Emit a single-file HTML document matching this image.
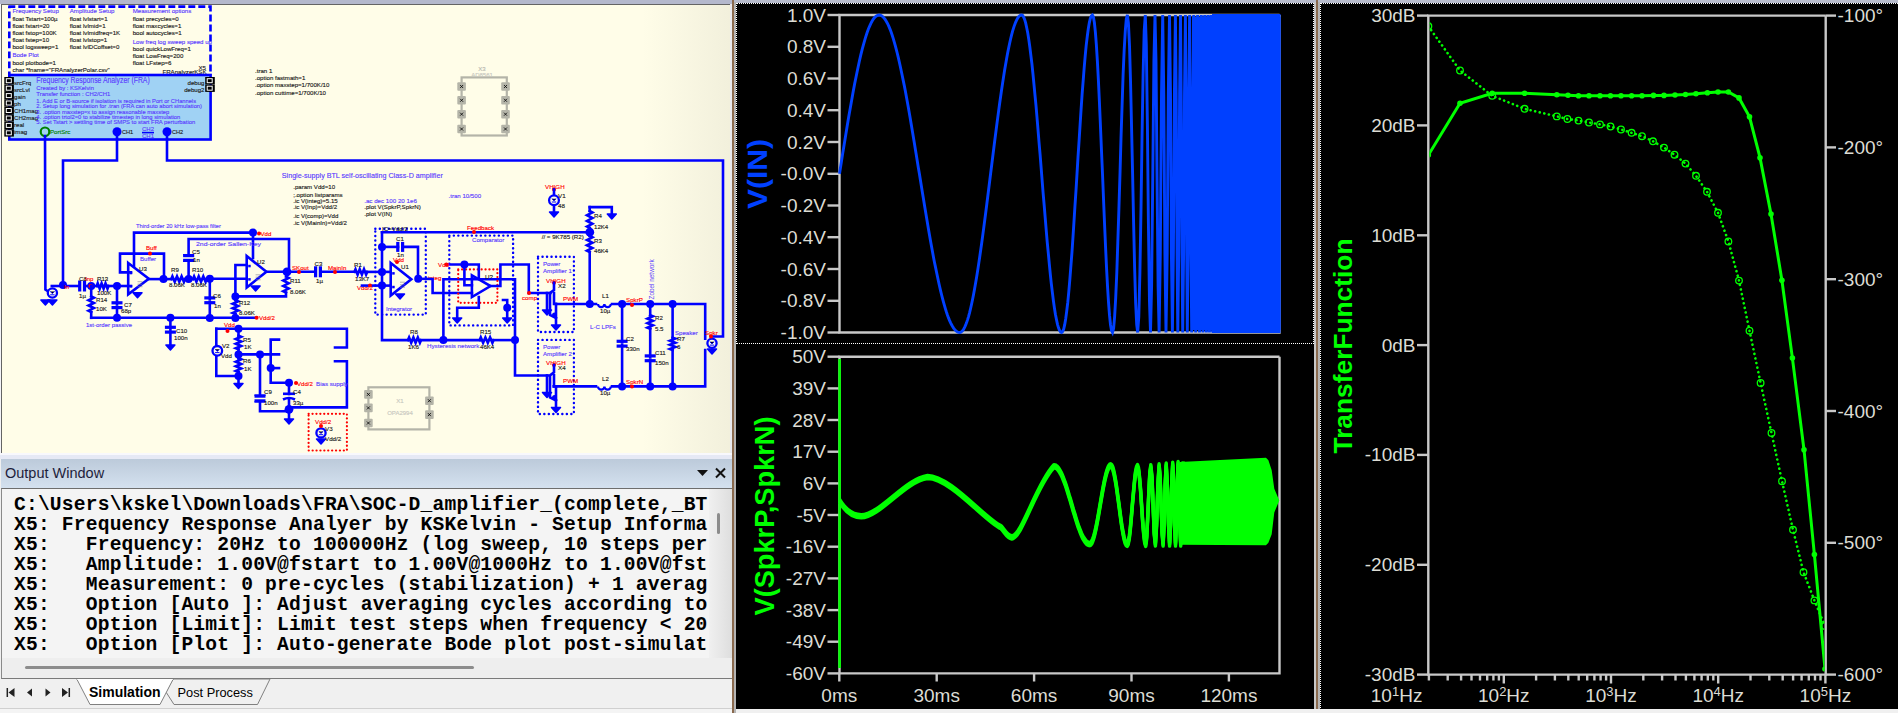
<!DOCTYPE html>
<html><head><meta charset="utf-8">
<style>
html,body{margin:0;padding:0;}
body{width:1898px;height:713px;position:relative;overflow:hidden;background:#f0f0f0;font-family:"Liberation Sans",sans-serif;}
.abs{position:absolute;}
.ln{height:20px;line-height:20px;white-space:pre;}
</style></head><body>
<!-- top strip -->
<div class="abs" style="left:0;top:0;width:732px;height:4px;background:#b4b8cc"></div>
<div class="abs" style="left:732px;top:0;width:1166px;height:3px;background:#b8bccc"></div>
<!-- schematic window -->
<div class="abs" style="left:0;top:4px;width:2px;height:450px;background:#f4f4f8"></div>
<div class="abs" style="left:1px;top:4px;width:729px;height:449px;background:linear-gradient(to right,#fffde8 0%,#fffde8 88%,#f2f0dc 100%);border-top:1px solid #646464;border-left:1px solid #646464;box-sizing:border-box;overflow:hidden">
<svg class="abs" style="left:-2px;top:-5px" width="730" height="453"><g font-family="Liberation Sans, sans-serif">
<path d="M8.3 6.6 H210.5 V75" stroke="#0000ff" stroke-width="2.6" fill="none" stroke-dasharray="7 3"/>
<path d="M9.3 6.6 V75" stroke="#0000ff" stroke-width="2.6" fill="none" stroke-dasharray="6.6 3.4" stroke-dashoffset="-5"/>
<text x="12.4" y="13.2" fill="#5a3cff" stroke="#5a3cff" stroke-width="0.14" font-size="6.1" text-anchor="start" font-weight="normal">Frequency Setup</text>
<text x="12.4" y="20.6" fill="#202020" stroke="#202020" stroke-width="0.14" font-size="6.1" text-anchor="start" font-weight="normal">float Tstart=100µ</text>
<text x="12.4" y="27.7" fill="#202020" stroke="#202020" stroke-width="0.14" font-size="6.1" text-anchor="start" font-weight="normal">float fstart=20</text>
<text x="12.4" y="34.8" fill="#202020" stroke="#202020" stroke-width="0.14" font-size="6.1" text-anchor="start" font-weight="normal">float fstop=100K</text>
<text x="12.4" y="41.9" fill="#202020" stroke="#202020" stroke-width="0.14" font-size="6.1" text-anchor="start" font-weight="normal">float fstep=10</text>
<text x="12.4" y="49" fill="#202020" stroke="#202020" stroke-width="0.14" font-size="6.1" text-anchor="start" font-weight="normal">bool logsweep=1</text>
<text x="12.4" y="57.4" fill="#5a3cff" stroke="#5a3cff" stroke-width="0.14" font-size="6.1" text-anchor="start" font-weight="normal">Bode Plot</text>
<text x="12.4" y="64.8" fill="#202020" stroke="#202020" stroke-width="0.14" font-size="6.1" text-anchor="start" font-weight="normal">bool plotbode=1</text>
<text x="12.4" y="72.2" fill="#202020" stroke="#202020" stroke-width="0.14" font-size="6.1" text-anchor="start" font-weight="normal">char *fname="FRAnalyzerPolar.csv"</text>
<text x="69.8" y="13.2" fill="#5a3cff" stroke="#5a3cff" stroke-width="0.14" font-size="6.1" text-anchor="start" font-weight="normal">Amplitude Setup</text>
<text x="69.8" y="20.6" fill="#202020" stroke="#202020" stroke-width="0.14" font-size="6.1" text-anchor="start" font-weight="normal">float lvlstart=1</text>
<text x="69.8" y="27.7" fill="#202020" stroke="#202020" stroke-width="0.14" font-size="6.1" text-anchor="start" font-weight="normal">float lvlmid=1</text>
<text x="69.8" y="34.8" fill="#202020" stroke="#202020" stroke-width="0.14" font-size="6.1" text-anchor="start" font-weight="normal">float lvlmidfreq=1K</text>
<text x="69.8" y="41.9" fill="#202020" stroke="#202020" stroke-width="0.14" font-size="6.1" text-anchor="start" font-weight="normal">float lvlstop=1</text>
<text x="69.8" y="49" fill="#202020" stroke="#202020" stroke-width="0.14" font-size="6.1" text-anchor="start" font-weight="normal">float lvlDCoffset=0</text>
<text x="132.7" y="13.2" fill="#5a3cff" stroke="#5a3cff" stroke-width="0.14" font-size="6.1" text-anchor="start" font-weight="normal">Measurement options</text>
<text x="132.7" y="20.6" fill="#202020" stroke="#202020" stroke-width="0.14" font-size="6.1" text-anchor="start" font-weight="normal">float precycles=0</text>
<text x="132.7" y="27.7" fill="#202020" stroke="#202020" stroke-width="0.14" font-size="6.1" text-anchor="start" font-weight="normal">float maxcycles=1</text>
<text x="132.7" y="34.8" fill="#202020" stroke="#202020" stroke-width="0.14" font-size="6.1" text-anchor="start" font-weight="normal">bool autocycles=1</text>
<text x="132.7" y="43.5" fill="#5a3cff" stroke="#5a3cff" stroke-width="0.14" font-size="6.1" text-anchor="start" font-weight="normal">Low freq log sweep speed up</text>
<text x="132.7" y="50.6" fill="#202020" stroke="#202020" stroke-width="0.14" font-size="6.1" text-anchor="start" font-weight="normal">bool quickLowFreq=1</text>
<text x="132.7" y="57.7" fill="#202020" stroke="#202020" stroke-width="0.14" font-size="6.1" text-anchor="start" font-weight="normal">float LowFreq=200</text>
<text x="132.7" y="64.8" fill="#202020" stroke="#202020" stroke-width="0.14" font-size="6.1" text-anchor="start" font-weight="normal">float LFstep=6</text>
<text x="206" y="69.5" fill="#202020" stroke="#202020" stroke-width="0.14" font-size="6.1" text-anchor="end" font-weight="normal">X5</text>
<text x="206.5" y="73.8" fill="#202020" stroke="#202020" stroke-width="0.14" font-size="6.1" text-anchor="end" font-weight="normal">FRAnalyzerKSK</text>
<rect x="9.3" y="75" width="201.3" height="64.5" fill="#a0d2f4" stroke="#0000ff" stroke-width="2.6"/>
<rect x="4.3" y="77" width="9.6" height="7.4" fill="#000"/>
<rect x="6.3" y="78.7" width="5" height="4" fill="none" stroke="#fff" stroke-width="1"/>
<rect x="4.3" y="84.5" width="9.6" height="7.4" fill="#000"/>
<rect x="6.3" y="86.2" width="5" height="4" fill="none" stroke="#fff" stroke-width="1"/>
<rect x="4.3" y="91.9" width="9.6" height="7.4" fill="#000"/>
<rect x="6.3" y="93.6" width="5" height="4" fill="none" stroke="#fff" stroke-width="1"/>
<rect x="4.3" y="99.3" width="9.6" height="7.4" fill="#000"/>
<rect x="6.3" y="101" width="5" height="4" fill="none" stroke="#fff" stroke-width="1"/>
<rect x="4.3" y="106.8" width="9.6" height="7.4" fill="#000"/>
<rect x="6.3" y="108.5" width="5" height="4" fill="none" stroke="#fff" stroke-width="1"/>
<rect x="4.3" y="114.2" width="9.6" height="7.4" fill="#000"/>
<rect x="6.3" y="116" width="5" height="4" fill="none" stroke="#fff" stroke-width="1"/>
<rect x="4.3" y="121.7" width="9.6" height="7.4" fill="#000"/>
<rect x="6.3" y="123.4" width="5" height="4" fill="none" stroke="#fff" stroke-width="1"/>
<rect x="4.3" y="129.2" width="9.6" height="7.4" fill="#000"/>
<rect x="6.3" y="130.8" width="5" height="4" fill="none" stroke="#fff" stroke-width="1"/>
<rect x="205.2" y="77" width="9.6" height="7.4" fill="#000"/>
<rect x="207.2" y="78.7" width="5" height="4" fill="none" stroke="#fff" stroke-width="1"/>
<rect x="205.2" y="84.5" width="9.6" height="7.4" fill="#000"/>
<rect x="207.2" y="86.2" width="5" height="4" fill="none" stroke="#fff" stroke-width="1"/>
<text x="14" y="85.3" fill="#202020" stroke="#202020" stroke-width="0.14" font-size="6.1" text-anchor="start" font-weight="normal">srcFrq</text>
<text x="14" y="92.2" fill="#202020" stroke="#202020" stroke-width="0.14" font-size="6.1" text-anchor="start" font-weight="normal">srcLvl</text>
<text x="14" y="99.1" fill="#202020" stroke="#202020" stroke-width="0.14" font-size="6.1" text-anchor="start" font-weight="normal">gain</text>
<text x="14" y="106" fill="#202020" stroke="#202020" stroke-width="0.14" font-size="6.1" text-anchor="start" font-weight="normal">ph</text>
<text x="14" y="112.9" fill="#202020" stroke="#202020" stroke-width="0.14" font-size="6.1" text-anchor="start" font-weight="normal">CH1mag</text>
<text x="14" y="119.8" fill="#202020" stroke="#202020" stroke-width="0.14" font-size="6.1" text-anchor="start" font-weight="normal">CH2mag</text>
<text x="14" y="126.7" fill="#202020" stroke="#202020" stroke-width="0.14" font-size="6.1" text-anchor="start" font-weight="normal">real</text>
<text x="14" y="133.6" fill="#202020" stroke="#202020" stroke-width="0.14" font-size="6.1" text-anchor="start" font-weight="normal">imag</text>
<text x="204.5" y="85.3" fill="#202020" stroke="#202020" stroke-width="0.14" font-size="6.1" text-anchor="end" font-weight="normal">debug</text>
<text x="204.5" y="92.2" fill="#202020" stroke="#202020" stroke-width="0.14" font-size="6.1" text-anchor="end" font-weight="normal">debug2</text>
<text x="36.3" y="83.2" fill="#5a3cff" stroke="#5a3cff" stroke-width="0.14" font-size="8.2" text-anchor="start" font-weight="normal" textLength="113.4" lengthAdjust="spacingAndGlyphs">Frequency Response Analyzer (FRA)</text>
<text x="36.3" y="90.4" fill="#5a3cff" stroke="#5a3cff" stroke-width="0.14" font-size="5.9" text-anchor="start" font-weight="normal">Created by : KSKelvin</text>
<text x="36.3" y="96.2" fill="#5a3cff" stroke="#5a3cff" stroke-width="0.14" font-size="5.9" text-anchor="start" font-weight="normal">Transfer function : CH2/CH1</text>
<text x="36.3" y="103.3" fill="#5a3cff" stroke="#5a3cff" stroke-width="0.14" font-size="6.1" text-anchor="start" font-weight="normal" textLength="159.7" lengthAdjust="spacingAndGlyphs">1. Add E or B-source if isolation is required in Port or CHannels</text>
<text x="36.3" y="108.4" fill="#5a3cff" stroke="#5a3cff" stroke-width="0.14" font-size="6.1" text-anchor="start" font-weight="normal" textLength="165.7" lengthAdjust="spacingAndGlyphs">2. Setup long simulation for .tran (FRA can auto abort simulation)</text>
<text x="36.3" y="114.1" fill="#5a3cff" stroke="#5a3cff" stroke-width="0.14" font-size="6.1" text-anchor="start" font-weight="normal" textLength="133" lengthAdjust="spacingAndGlyphs">3. .option maxstep=x to assign reasonable maxstep</text>
<text x="36.3" y="119.2" fill="#5a3cff" stroke="#5a3cff" stroke-width="0.14" font-size="6.1" text-anchor="start" font-weight="normal" textLength="144" lengthAdjust="spacingAndGlyphs">4. .option trtol2=0 to stabilize timestep in long simulation</text>
<text x="36.3" y="124.4" fill="#5a3cff" stroke="#5a3cff" stroke-width="0.14" font-size="6.1" text-anchor="start" font-weight="normal" textLength="159" lengthAdjust="spacingAndGlyphs">5. Set Tstart &gt; settling time of SMPS to start FRA perturbation</text>
<circle cx="45" cy="131.8" r="4.3" fill="none" stroke="#008000" stroke-width="2.2"/>
<text x="50" y="134" fill="#008000" stroke="#008000" stroke-width="0.14" font-size="6.1" text-anchor="start" font-weight="normal">PortSrc</text>
<circle cx="117" cy="131.8" r="4.5" fill="#0000ff"/>
<text x="122" y="134" fill="#202020" stroke="#202020" stroke-width="0.14" font-size="5.6" text-anchor="start" font-weight="normal">CH1</text>
<circle cx="167" cy="131.8" r="4.5" fill="#0000ff"/>
<text x="172" y="134" fill="#202020" stroke="#202020" stroke-width="0.14" font-size="5.6" text-anchor="start" font-weight="normal">CH2</text>
<text x="148" y="130.5" fill="#5a3cff" stroke="#5a3cff" stroke-width="0.14" font-size="6" text-anchor="middle" font-weight="normal">CH2</text>
<path d="M142 132.6 H154" stroke="#0000ff" stroke-width="1.6"/>
<text x="148" y="138" fill="#5a3cff" stroke="#5a3cff" stroke-width="0.14" font-size="6" text-anchor="middle" font-weight="normal">CH1</text>
<rect x="461.6" y="77.4" width="45.2" height="58.1" fill="none" stroke="#b4b4a8" stroke-width="2.2"/>
<rect x="457.3" y="82.2" width="8.6" height="8.6" rx="1" fill="#b4b4a8"/>
<path d="M460.1 85 l3 3 m0 -3 l-3 3" stroke="#000" stroke-width="0.8"/>
<rect x="501.2" y="82.2" width="8.6" height="8.6" rx="1" fill="#b4b4a8"/>
<path d="M504 85 l3 3 m0 -3 l-3 3" stroke="#000" stroke-width="0.8"/>
<rect x="457.3" y="96" width="8.6" height="8.6" rx="1" fill="#b4b4a8"/>
<path d="M460.1 98.8 l3 3 m0 -3 l-3 3" stroke="#000" stroke-width="0.8"/>
<rect x="501.2" y="96" width="8.6" height="8.6" rx="1" fill="#b4b4a8"/>
<path d="M504 98.8 l3 3 m0 -3 l-3 3" stroke="#000" stroke-width="0.8"/>
<rect x="457.3" y="109.9" width="8.6" height="8.6" rx="1" fill="#b4b4a8"/>
<path d="M460.1 112.7 l3 3 m0 -3 l-3 3" stroke="#000" stroke-width="0.8"/>
<rect x="501.2" y="109.9" width="8.6" height="8.6" rx="1" fill="#b4b4a8"/>
<path d="M504 112.7 l3 3 m0 -3 l-3 3" stroke="#000" stroke-width="0.8"/>
<rect x="457.3" y="124.7" width="8.6" height="8.6" rx="1" fill="#b4b4a8"/>
<path d="M460.1 127.5 l3 3 m0 -3 l-3 3" stroke="#000" stroke-width="0.8"/>
<rect x="501.2" y="124.7" width="8.6" height="8.6" rx="1" fill="#b4b4a8"/>
<path d="M504 127.5 l3 3 m0 -3 l-3 3" stroke="#000" stroke-width="0.8"/>
<text x="482" y="71" fill="#b8b8b0" stroke="#b8b8b0" stroke-width="0.14" font-size="6" text-anchor="middle" font-weight="normal">X3</text>
<text x="482" y="77" fill="#c8c8c0" stroke="#c8c8c0" stroke-width="0.14" font-size="6" text-anchor="middle" font-weight="normal">AD8561</text>
<text x="255" y="73" fill="#202020" stroke="#202020" stroke-width="0.14" font-size="6.1" text-anchor="start" font-weight="normal">.tran 1</text>
<text x="255" y="80.2" fill="#202020" stroke="#202020" stroke-width="0.14" font-size="6.1" text-anchor="start" font-weight="normal">.option fastmath=1</text>
<text x="255" y="87.4" fill="#202020" stroke="#202020" stroke-width="0.14" font-size="6.1" text-anchor="start" font-weight="normal">.option maxstep=1/700K/10</text>
<text x="255" y="94.6" fill="#202020" stroke="#202020" stroke-width="0.14" font-size="6.1" text-anchor="start" font-weight="normal">.option cuttime=1/700K/10</text>
<path d="M45 136 L45.4 289.6 L49 292" stroke="#0000ff" stroke-width="2.6" fill="none" stroke-linejoin="miter" stroke-linecap="square"/>
<path d="M117 136 L117 160.5 L63 160.5 L63 285.6" stroke="#0000ff" stroke-width="2.6" fill="none" stroke-linejoin="miter" stroke-linecap="square"/>
<path d="M167 136 L167 160.5 L723 160.5 L723 336.5 L711 336.5" stroke="#0000ff" stroke-width="2.6" fill="none" stroke-linejoin="miter" stroke-linecap="square"/>
<circle cx="52.4" cy="293" r="4.6" stroke="#0000ff" stroke-width="2.3" fill="#fffde8"/>
<path d="M50.2 291.5 L52.4 293.5 L54.6 291.5 M50.2 294.8 h4.4" stroke="#0000ff" stroke-width="1"/>
<path d="M40.9 300 H49.9 L45.4 305 Z" fill="#0000ff" stroke="#0000ff" stroke-width="1.5" stroke-linejoin="round"/>
<path d="M47.9 300 H56.9 L52.4 305 Z" fill="#0000ff" stroke="#0000ff" stroke-width="1.5" stroke-linejoin="round"/>
<circle cx="63" cy="285" r="4.0" fill="#0000ff"/>
<path d="M51.8 286 L79 286" stroke="#0000ff" stroke-width="2.6" fill="none" stroke-linejoin="miter" stroke-linecap="square"/>
<path d="M85 286 L96.7 286" stroke="#0000ff" stroke-width="2.6" fill="none" stroke-linejoin="miter" stroke-linecap="square"/>
<rect x="78.1" y="280.5" width="3.2" height="11" fill="#0000ff"/>
<rect x="82.9" y="280.5" width="3.2" height="11" fill="#0000ff"/>
<path d="M96.7 286 L97.7 283.3 L99.7 288.7 L101.6 283.3 L103.6 288.7 L105.5 283.3 L107.5 288.7 L108.5 286" stroke="#0000ff" stroke-width="2.6" fill="none" stroke-linejoin="miter" stroke-linecap="square"/>
<path d="M108.5 286 L131 286" stroke="#0000ff" stroke-width="2.6" fill="none" stroke-linejoin="miter" stroke-linecap="square"/>
<circle cx="91.2" cy="286" r="4.0" fill="#0000ff"/>
<circle cx="90.5" cy="286" r="2" fill="#ff0000"/>
<text x="79" y="280.6" fill="#202020" stroke="#202020" stroke-width="0.14" font-size="6.1" text-anchor="start" font-weight="normal">C8</text>
<text x="79" y="298" fill="#202020" stroke="#202020" stroke-width="0.14" font-size="6.1" text-anchor="start" font-weight="normal">1µ</text>
<text x="85" y="281" fill="#ff0000" stroke="#ff0000" stroke-width="0.14" font-size="6" text-anchor="start" font-weight="normal">Inp</text>
<text x="64" y="289" fill="#ff0000" stroke="#ff0000" stroke-width="0.14" font-size="6" text-anchor="start" font-weight="normal">In</text>
<text x="97" y="281" fill="#202020" stroke="#202020" stroke-width="0.14" font-size="6.1" text-anchor="start" font-weight="normal">R13</text>
<text x="97" y="294.5" fill="#202020" stroke="#202020" stroke-width="0.14" font-size="6.1" text-anchor="start" font-weight="normal">100K</text>
<path d="M91.2 296.4 L93.9 297.7 L88.5 300.3 L93.9 302.9 L88.5 305.5 L93.9 308.1 L88.5 310.7 L91.2 312" stroke="#0000ff" stroke-width="2.6" fill="none" stroke-linejoin="miter" stroke-linecap="square"/>
<path d="M91.2 286 L91.2 296.4" stroke="#0000ff" stroke-width="2.6" fill="none" stroke-linejoin="miter" stroke-linecap="square"/>
<path d="M91.2 312 L91.2 317.8" stroke="#0000ff" stroke-width="2.6" fill="none" stroke-linejoin="miter" stroke-linecap="square"/>
<text x="96" y="302" fill="#202020" stroke="#202020" stroke-width="0.14" font-size="6.1" text-anchor="start" font-weight="normal">R14</text>
<text x="96" y="311" fill="#202020" stroke="#202020" stroke-width="0.14" font-size="6.1" text-anchor="start" font-weight="normal">10K</text>
<path d="M91.2 317.8 L256.6 317.8" stroke="#0000ff" stroke-width="2.6" fill="none" stroke-linejoin="miter" stroke-linecap="square"/>
<circle cx="117" cy="286" r="4.0" fill="#0000ff"/>
<circle cx="117" cy="317.8" r="4.0" fill="#0000ff"/>
<circle cx="170.4" cy="317.8" r="4.0" fill="#0000ff"/>
<circle cx="209.8" cy="318" r="4.0" fill="#0000ff"/>
<circle cx="235.4" cy="318" r="4.0" fill="#0000ff"/>
<circle cx="256.6" cy="317.8" r="2" fill="#ff0000"/>
<text x="259" y="320" fill="#ff0000" stroke="#ff0000" stroke-width="0.14" font-size="6.1" text-anchor="start" font-weight="normal">Vdd/2</text>
<path d="M117 286 L117 303.9" stroke="#0000ff" stroke-width="2.6" fill="none" stroke-linejoin="miter" stroke-linecap="square"/>
<rect x="111.5" y="301.2" width="11" height="3.2" fill="#0000ff"/>
<rect x="111.5" y="306" width="11" height="3.2" fill="#0000ff"/>
<path d="M117 306.5 L117 317.8" stroke="#0000ff" stroke-width="2.6" fill="none" stroke-linejoin="miter" stroke-linecap="square"/>
<text x="124" y="307" fill="#202020" stroke="#202020" stroke-width="0.14" font-size="6.1" text-anchor="start" font-weight="normal">C7</text>
<text x="121" y="313" fill="#202020" stroke="#202020" stroke-width="0.14" font-size="6.1" text-anchor="start" font-weight="normal">68p</text>
<text x="86" y="327" fill="#5a3cff" stroke="#5a3cff" stroke-width="0.14" font-size="6" text-anchor="start" font-weight="normal">1st-order passive</text>
<path d="M170.4 317.8 L170.4 345" stroke="#0000ff" stroke-width="2.6" fill="none" stroke-linejoin="miter" stroke-linecap="square"/>
<rect x="164.9" y="325.7" width="11" height="3.2" fill="#0000ff"/>
<rect x="164.9" y="330.5" width="11" height="3.2" fill="#0000ff"/>
<path d="M165.9 345 H174.9 L170.4 350 Z" fill="#0000ff" stroke="#0000ff" stroke-width="1.5" stroke-linejoin="round"/>
<text x="176" y="333" fill="#202020" stroke="#202020" stroke-width="0.14" font-size="6.1" text-anchor="start" font-weight="normal">C10</text>
<text x="174" y="340" fill="#202020" stroke="#202020" stroke-width="0.14" font-size="6.1" text-anchor="start" font-weight="normal">100n</text>
<path d="M128.2 263 L148.8 278.7 L128.2 294.4 Z" stroke="#0000ff" stroke-width="2.6" fill="none"/>
<rect x="129.7" y="271.8" width="2.5" height="2.5" fill="#0000ff"/>
<rect x="129.7" y="285" width="2.5" height="2.5" fill="#0000ff"/>
<path d="M137.5 281.7 h5" stroke="#7a7a90" stroke-width="0.6"/>
<path d="M137.5 284.2 h5" stroke="#7a7a90" stroke-width="0.6"/>
<path d="M137.5 286.7 h5" stroke="#7a7a90" stroke-width="0.6"/>
<path d="M133 292.8 H142 L137.5 297.8 Z" fill="#0000ff" stroke="#0000ff" stroke-width="1.5" stroke-linejoin="round"/>
<path d="M148.8 279.1 L171.3 279.1" stroke="#0000ff" stroke-width="2.6" fill="none" stroke-linejoin="miter" stroke-linecap="square"/>
<path d="M164 279.1 L164 253.6 L120 253.6 L120 272.4 L131 272.4" stroke="#0000ff" stroke-width="2.6" fill="none" stroke-linejoin="miter" stroke-linecap="square"/>
<circle cx="163.5" cy="279.1" r="4.0" fill="#0000ff"/>
<circle cx="150" cy="253.6" r="2" fill="#ff0000"/>
<text x="146" y="250" fill="#ff0000" stroke="#ff0000" stroke-width="0.14" font-size="6.1" text-anchor="start" font-weight="normal">Buff</text>
<text x="140" y="261" fill="#5a3cff" stroke="#5a3cff" stroke-width="0.14" font-size="6.1" text-anchor="start" font-weight="normal">Buffer</text>
<text x="139" y="271" fill="#202020" stroke="#202020" stroke-width="0.14" font-size="6.1" text-anchor="start" font-weight="normal">U3</text>
<text x="136" y="228" fill="#5a3cff" stroke="#5a3cff" stroke-width="0.14" font-size="6.1" text-anchor="start" font-weight="normal" textLength="85" lengthAdjust="spacingAndGlyphs">Third-order 20 kHz low-pass filter</text>
<path d="M134 266 L134 232.6 L253 232.6 L253 258" stroke="#0000ff" stroke-width="2.6" fill="none" stroke-linejoin="miter" stroke-linecap="square"/>
<circle cx="253" cy="232.6" r="4.0" fill="#0000ff"/>
<circle cx="259" cy="233.4" r="2" fill="#ff0000"/>
<text x="260.5" y="236" fill="#ff0000" stroke="#ff0000" stroke-width="0.14" font-size="6.1" text-anchor="start" font-weight="normal">Vdd</text>
<path d="M171.3 279.1 L172.4 276.4 L174.7 281.8 L177 276.4 L179.3 281.8 L181.6 276.4 L183.9 281.8 L185 279.1" stroke="#0000ff" stroke-width="2.6" fill="none" stroke-linejoin="miter" stroke-linecap="square"/>
<path d="M185 279.1 L193 279.1" stroke="#0000ff" stroke-width="2.6" fill="none" stroke-linejoin="miter" stroke-linecap="square"/>
<path d="M193 279.1 L194.1 276.4 L196.4 281.8 L198.7 276.4 L201 281.8 L203.3 276.4 L205.6 281.8 L206.7 279.1" stroke="#0000ff" stroke-width="2.6" fill="none" stroke-linejoin="miter" stroke-linecap="square"/>
<path d="M206.7 278.7 L246.7 278.7" stroke="#0000ff" stroke-width="2.6" fill="none" stroke-linejoin="miter" stroke-linecap="square"/>
<circle cx="188.6" cy="279.1" r="4.0" fill="#0000ff"/>
<circle cx="209.8" cy="278.7" r="4.0" fill="#0000ff"/>
<text x="171" y="272" fill="#202020" stroke="#202020" stroke-width="0.14" font-size="6.1" text-anchor="start" font-weight="normal">R9</text>
<text x="169" y="287" fill="#202020" stroke="#202020" stroke-width="0.14" font-size="6.1" text-anchor="start" font-weight="normal">8.06K</text>
<text x="192" y="272" fill="#202020" stroke="#202020" stroke-width="0.14" font-size="6.1" text-anchor="start" font-weight="normal">R10</text>
<text x="191" y="287" fill="#202020" stroke="#202020" stroke-width="0.14" font-size="6.1" text-anchor="start" font-weight="normal">8.06K</text>
<path d="M188.6 279.1 L188.6 239 L289 239 L289 271.8" stroke="#0000ff" stroke-width="2.6" fill="none" stroke-linejoin="miter" stroke-linecap="square"/>
<rect x="183.1" y="254" width="11" height="3.2" fill="#0000ff"/>
<rect x="183.1" y="258.8" width="11" height="3.2" fill="#0000ff"/>
<rect x="183" y="255.5" width="11" height="5" fill="#fffde8"/>
<rect x="183.1" y="254" width="11" height="3.2" fill="#0000ff"/>
<rect x="183.1" y="258.8" width="11" height="3.2" fill="#0000ff"/>
<text x="192" y="254" fill="#202020" stroke="#202020" stroke-width="0.14" font-size="6.1" text-anchor="start" font-weight="normal">C5</text>
<text x="193" y="262" fill="#202020" stroke="#202020" stroke-width="0.14" font-size="6.1" text-anchor="start" font-weight="normal">1n</text>
<text x="196" y="246" fill="#5a3cff" stroke="#5a3cff" stroke-width="0.14" font-size="6.2" text-anchor="start" font-weight="normal" textLength="65" lengthAdjust="spacingAndGlyphs">2nd-order Sallen-Key</text>
<path d="M246.7 256 L266.4 271.8 L246.7 287.5 Z" stroke="#0000ff" stroke-width="2.6" fill="none"/>
<rect x="248.2" y="264.8" width="2.5" height="2.5" fill="#0000ff"/>
<rect x="248.2" y="278.1" width="2.5" height="2.5" fill="#0000ff"/>
<path d="M255.6 274.8 h5" stroke="#7a7a90" stroke-width="0.6"/>
<path d="M255.6 277.2 h5" stroke="#7a7a90" stroke-width="0.6"/>
<path d="M255.6 279.8 h5" stroke="#7a7a90" stroke-width="0.6"/>
<path d="M251.1 285.9 H260.1 L255.6 290.9 Z" fill="#0000ff" stroke="#0000ff" stroke-width="1.5" stroke-linejoin="round"/>
<path d="M246.7 265 L235.4 265 L235.4 296.4 L286 296.4 L286 292.5" stroke="#0000ff" stroke-width="2.6" fill="none" stroke-linejoin="miter" stroke-linecap="square"/>
<path d="M286 276.7 L288.7 278 L283.3 280.6 L288.7 283.3 L283.3 285.9 L288.7 288.6 L283.3 291.2 L286 292.5" stroke="#0000ff" stroke-width="2.6" fill="none" stroke-linejoin="miter" stroke-linecap="square"/>
<circle cx="235.4" cy="296.4" r="4.0" fill="#0000ff"/>
<circle cx="287" cy="271.8" r="4.4" fill="#0000ff"/>
<text x="257" y="264" fill="#202020" stroke="#202020" stroke-width="0.14" font-size="6.1" text-anchor="start" font-weight="normal">U2</text>
<path d="M209.8 278.7 L209.8 298.9" stroke="#0000ff" stroke-width="2.6" fill="none" stroke-linejoin="miter" stroke-linecap="square"/>
<rect x="204.3" y="296.3" width="11" height="3.2" fill="#0000ff"/>
<rect x="204.3" y="301.1" width="11" height="3.2" fill="#0000ff"/>
<path d="M209.8 301.6 L209.8 318" stroke="#0000ff" stroke-width="2.6" fill="none" stroke-linejoin="miter" stroke-linecap="square"/>
<text x="213" y="298" fill="#202020" stroke="#202020" stroke-width="0.14" font-size="6.1" text-anchor="start" font-weight="normal">C6</text>
<text x="214" y="308" fill="#202020" stroke="#202020" stroke-width="0.14" font-size="6.1" text-anchor="start" font-weight="normal">1n</text>
<path d="M235.4 300.3 L238.1 301.4 L232.7 303.7 L238.1 306 L232.7 308.3 L238.1 310.6 L232.7 312.9 L235.4 314" stroke="#0000ff" stroke-width="2.6" fill="none" stroke-linejoin="miter" stroke-linecap="square"/>
<path d="M235.4 314 L235.4 318" stroke="#0000ff" stroke-width="2.6" fill="none" stroke-linejoin="miter" stroke-linecap="square"/>
<text x="239" y="305" fill="#202020" stroke="#202020" stroke-width="0.14" font-size="6.1" text-anchor="start" font-weight="normal">R12</text>
<text x="239" y="315" fill="#202020" stroke="#202020" stroke-width="0.14" font-size="6.1" text-anchor="start" font-weight="normal">8.06K</text>
<text x="290" y="283" fill="#202020" stroke="#202020" stroke-width="0.14" font-size="6.1" text-anchor="start" font-weight="normal">R11</text>
<text x="290" y="294" fill="#202020" stroke="#202020" stroke-width="0.14" font-size="6.1" text-anchor="start" font-weight="normal">8.06K</text>
<path d="M266.4 271.8 L315.5 271.8" stroke="#0000ff" stroke-width="2.6" fill="none" stroke-linejoin="miter" stroke-linecap="square"/>
<rect x="314" y="266.3" width="3.2" height="11" fill="#0000ff"/>
<rect x="318.8" y="266.3" width="3.2" height="11" fill="#0000ff"/>
<path d="M320.5 271.8 L354.4 271.8" stroke="#0000ff" stroke-width="2.6" fill="none" stroke-linejoin="miter" stroke-linecap="square"/>
<circle cx="299" cy="272" r="2" fill="#ff0000"/>
<text x="292" y="270" fill="#ff0000" stroke="#ff0000" stroke-width="0.14" font-size="6.1" text-anchor="start" font-weight="normal">SKout</text>
<circle cx="335" cy="272" r="2" fill="#ff0000"/>
<text x="328" y="270" fill="#ff0000" stroke="#ff0000" stroke-width="0.14" font-size="6.1" text-anchor="start" font-weight="normal">MainIn</text>
<text x="314.5" y="266" fill="#202020" stroke="#202020" stroke-width="0.14" font-size="6.1" text-anchor="start" font-weight="normal">C3</text>
<text x="316" y="283" fill="#202020" stroke="#202020" stroke-width="0.14" font-size="6.1" text-anchor="start" font-weight="normal">1µ</text>
<path d="M354.4 271.9 L355.5 269.2 L357.6 274.6 L359.7 269.2 L361.9 274.6 L364 269.2 L366.1 274.6 L367.2 271.9" stroke="#0000ff" stroke-width="2.6" fill="none" stroke-linejoin="miter" stroke-linecap="square"/>
<path d="M367.2 271.9 L390.7 271.9" stroke="#0000ff" stroke-width="2.6" fill="none" stroke-linejoin="miter" stroke-linecap="square"/>
<text x="354" y="267" fill="#202020" stroke="#202020" stroke-width="0.14" font-size="6.1" text-anchor="start" font-weight="normal">R1</text>
<text x="355" y="281" fill="#202020" stroke="#202020" stroke-width="0.14" font-size="6.1" text-anchor="start" font-weight="normal">13K7</text>
<text x="357" y="290" fill="#ff0000" stroke="#ff0000" stroke-width="0.14" font-size="6.1" text-anchor="start" font-weight="normal">Vdd/2</text>
<path d="M216.3 328.8 L346.9 328.8 L346.9 347.5 L335 347.5" stroke="#0000ff" stroke-width="2.6" fill="none" stroke-linejoin="miter" stroke-linecap="square"/>
<path d="M335 361.2 L346.9 361.2 L346.9 407.4 L289 407.4" stroke="#0000ff" stroke-width="2.6" fill="none" stroke-linejoin="miter" stroke-linecap="square"/>
<path d="M216.3 328.8 L216.3 376 L238.5 376" stroke="#0000ff" stroke-width="2.6" fill="none" stroke-linejoin="miter" stroke-linecap="square"/>
<circle cx="217.3" cy="350.8" r="4.8" stroke="#0000ff" stroke-width="2.3" fill="#fffde8"/>
<path d="M215.1 349.3 L217.3 351.3 L219.5 349.3 M215.1 352.6 h4.4" stroke="#0000ff" stroke-width="1"/>
<text x="222" y="348" fill="#202020" stroke="#202020" stroke-width="0.14" font-size="6.1" text-anchor="start" font-weight="normal">V2</text>
<text x="221" y="358" fill="#202020" stroke="#202020" stroke-width="0.14" font-size="6.1" text-anchor="start" font-weight="normal">Vdd</text>
<circle cx="227.5" cy="331" r="2" fill="#ff0000"/>
<text x="224" y="327" fill="#ff0000" stroke="#ff0000" stroke-width="0.14" font-size="6.1" text-anchor="start" font-weight="normal">Vdd</text>
<circle cx="238.5" cy="328.8" r="4.0" fill="#0000ff"/>
<path d="M238.5 335.7 L241.2 336.8 L235.8 339.1 L241.2 341.4 L235.8 343.7 L241.2 346 L235.8 348.3 L238.5 349.4" stroke="#0000ff" stroke-width="2.6" fill="none" stroke-linejoin="miter" stroke-linecap="square"/>
<path d="M238.5 328.8 L238.5 335.7" stroke="#0000ff" stroke-width="2.6" fill="none" stroke-linejoin="miter" stroke-linecap="square"/>
<path d="M238.5 349.4 L238.5 358.3" stroke="#0000ff" stroke-width="2.6" fill="none" stroke-linejoin="miter" stroke-linecap="square"/>
<path d="M238.5 358.3 L241.2 359.4 L235.8 361.7 L241.2 364 L235.8 366.3 L241.2 368.6 L235.8 370.9 L238.5 372" stroke="#0000ff" stroke-width="2.6" fill="none" stroke-linejoin="miter" stroke-linecap="square"/>
<path d="M238.5 372 L238.5 383.5" stroke="#0000ff" stroke-width="2.6" fill="none" stroke-linejoin="miter" stroke-linecap="square"/>
<path d="M234 383.5 H243 L238.5 388.5 Z" fill="#0000ff" stroke="#0000ff" stroke-width="1.5" stroke-linejoin="round"/>
<circle cx="238.5" cy="354.4" r="4.0" fill="#0000ff"/>
<circle cx="238.5" cy="376" r="4.0" fill="#0000ff"/>
<text x="243" y="342" fill="#202020" stroke="#202020" stroke-width="0.14" font-size="6.1" text-anchor="start" font-weight="normal">R5</text>
<text x="244" y="349" fill="#202020" stroke="#202020" stroke-width="0.14" font-size="6.1" text-anchor="start" font-weight="normal">1K</text>
<text x="243" y="363" fill="#202020" stroke="#202020" stroke-width="0.14" font-size="6.1" text-anchor="start" font-weight="normal">R6</text>
<text x="244" y="371" fill="#202020" stroke="#202020" stroke-width="0.14" font-size="6.1" text-anchor="start" font-weight="normal">1K</text>
<path d="M238.5 354.4 L279 354.4" stroke="#0000ff" stroke-width="2.6" fill="none" stroke-linejoin="miter" stroke-linecap="square"/>
<circle cx="260" cy="354.4" r="4.0" fill="#0000ff"/>
<path d="M279 339.6 L270.7 339.6 L270.7 382.8 L289 382.8" stroke="#0000ff" stroke-width="2.6" fill="none" stroke-linejoin="miter" stroke-linecap="square"/>
<path d="M270.7 368.1 L279 368.1" stroke="#0000ff" stroke-width="2.6" fill="none" stroke-linejoin="miter" stroke-linecap="square"/>
<circle cx="270.7" cy="368.1" r="4.0" fill="#0000ff"/>
<path d="M260 354.4 L260 411.3 L289 411.3" stroke="#0000ff" stroke-width="2.6" fill="none" stroke-linejoin="miter" stroke-linecap="square"/>
<rect x="254.5" y="394.5" width="11" height="3.2" fill="#0000ff"/>
<rect x="254.5" y="399.3" width="11" height="3.2" fill="#0000ff"/>
<rect x="254" y="396" width="12" height="5" fill="#fffde8"/>
<rect x="254.5" y="394.5" width="11" height="3.2" fill="#0000ff"/>
<rect x="254.5" y="399.3" width="11" height="3.2" fill="#0000ff"/>
<text x="264" y="394" fill="#202020" stroke="#202020" stroke-width="0.14" font-size="6.1" text-anchor="start" font-weight="normal">C9</text>
<text x="264" y="405" fill="#202020" stroke="#202020" stroke-width="0.14" font-size="6.1" text-anchor="start" font-weight="normal">100n</text>
<circle cx="289" cy="382.8" r="4.0" fill="#0000ff"/>
<circle cx="296" cy="383" r="2" fill="#ff0000"/>
<text x="297" y="385.5" fill="#ff0000" stroke="#ff0000" stroke-width="0.14" font-size="6.1" text-anchor="start" font-weight="normal">Vdd/2</text>
<text x="316" y="385.5" fill="#5a3cff" stroke="#5a3cff" stroke-width="0.14" font-size="6.2" text-anchor="start" font-weight="normal">Bias supply</text>
<path d="M289 382.8 L289 394" stroke="#0000ff" stroke-width="2.6" fill="none" stroke-linejoin="miter" stroke-linecap="square"/>
<path d="M289 399.5 L289 419" stroke="#0000ff" stroke-width="2.6" fill="none" stroke-linejoin="miter" stroke-linecap="square"/>
<rect x="283" y="392.5" width="12" height="2.6" fill="#0000ff"/><path d="M283 399.5 Q289 396.5 295 399.5" stroke="#0000ff" stroke-width="2.6" fill="none"/>
<circle cx="289" cy="409.3" r="4.4" fill="#0000ff"/>
<path d="M284.5 419 H293.5 L289 424 Z" fill="#0000ff" stroke="#0000ff" stroke-width="1.5" stroke-linejoin="round"/>
<text x="293" y="394" fill="#202020" stroke="#202020" stroke-width="0.14" font-size="6.1" text-anchor="start" font-weight="normal">C4</text>
<text x="293" y="405" fill="#202020" stroke="#202020" stroke-width="0.14" font-size="6.1" text-anchor="start" font-weight="normal">33µ</text>
<path d="M308.6 413.8 H346.9 V450.5 H308.6 Z" stroke="#ff0000" stroke-width="2.2" fill="none" stroke-dasharray="0.1 3.8" stroke-linecap="round"/>
<circle cx="321" cy="432.9" r="4.6" stroke="#0000ff" stroke-width="2.3" fill="#fffde8"/>
<path d="M318.8 431.4 L321 433.4 L323.2 431.4 M318.8 434.7 h4.4" stroke="#0000ff" stroke-width="1"/>
<circle cx="321" cy="426" r="2" fill="#ff0000"/>
<path d="M316.5 439 H325.5 L321 444 Z" fill="#0000ff" stroke="#0000ff" stroke-width="1.5" stroke-linejoin="round"/>
<text x="315" y="424" fill="#ff0000" stroke="#ff0000" stroke-width="0.14" font-size="6.2" text-anchor="start" font-weight="normal">Vdd/2</text>
<text x="325" y="431" fill="#202020" stroke="#202020" stroke-width="0.14" font-size="6.2" text-anchor="start" font-weight="normal">V3</text>
<text x="325" y="441" fill="#202020" stroke="#202020" stroke-width="0.14" font-size="6.2" text-anchor="start" font-weight="normal">Vdd/2</text>
<rect x="368.4" y="387.3" width="61" height="42.1" fill="none" stroke="#b4b4a8" stroke-width="2.2"/>
<rect x="364.1" y="390.1" width="8.6" height="8.6" rx="1" fill="#b4b4a8"/>
<path d="M366.9 392.9 l3 3 m0 -3 l-3 3" stroke="#000" stroke-width="0.8"/>
<rect x="364.1" y="403.6" width="8.6" height="8.6" rx="1" fill="#b4b4a8"/>
<path d="M366.9 406.4 l3 3 m0 -3 l-3 3" stroke="#000" stroke-width="0.8"/>
<rect x="364.1" y="418.7" width="8.6" height="8.6" rx="1" fill="#b4b4a8"/>
<path d="M366.9 421.5 l3 3 m0 -3 l-3 3" stroke="#000" stroke-width="0.8"/>
<rect x="425.1" y="396.4" width="8.6" height="8.6" rx="1" fill="#b4b4a8"/>
<path d="M427.9 399.2 l3 3 m0 -3 l-3 3" stroke="#000" stroke-width="0.8"/>
<rect x="425.1" y="410.3" width="8.6" height="8.6" rx="1" fill="#b4b4a8"/>
<path d="M427.9 413.1 l3 3 m0 -3 l-3 3" stroke="#000" stroke-width="0.8"/>
<text x="400" y="403" fill="#c8c8c0" stroke="#c8c8c0" stroke-width="0.14" font-size="6" text-anchor="middle" font-weight="normal">X1</text>
<text x="400" y="415" fill="#c8c8c0" stroke="#c8c8c0" stroke-width="0.14" font-size="6" text-anchor="middle" font-weight="normal">OPA2994</text>
<text x="281.8" y="178" fill="#5a3cff" stroke="#5a3cff" stroke-width="0.14" font-size="7.4" text-anchor="start" font-weight="normal" textLength="161" lengthAdjust="spacingAndGlyphs">Single-supply BTL self-oscillating Class-D amplifier</text>
<text x="293.2" y="188.7" fill="#202020" stroke="#202020" stroke-width="0.14" font-size="6.1" text-anchor="start" font-weight="normal">.param Vdd=10</text>
<text x="293.2" y="197.2" fill="#202020" stroke="#202020" stroke-width="0.14" font-size="6.1" text-anchor="start" font-weight="normal">;.option listparams</text>
<text x="293.2" y="203" fill="#202020" stroke="#202020" stroke-width="0.14" font-size="6.1" text-anchor="start" font-weight="normal">.ic V(integ)=5.15</text>
<text x="293.2" y="209.2" fill="#202020" stroke="#202020" stroke-width="0.14" font-size="6.1" text-anchor="start" font-weight="normal">.ic V(Inp)=Vdd/2</text>
<text x="293.2" y="217.8" fill="#202020" stroke="#202020" stroke-width="0.14" font-size="6.1" text-anchor="start" font-weight="normal">.ic V(comp)=Vdd</text>
<text x="293.2" y="224.6" fill="#202020" stroke="#202020" stroke-width="0.14" font-size="6.1" text-anchor="start" font-weight="normal">.ic V(MainIn)=Vdd/2</text>
<text x="364.2" y="203" fill="#5a3cff" stroke="#5a3cff" stroke-width="0.14" font-size="6.2" text-anchor="start" font-weight="normal">.ac dec 100 20 1e6</text>
<text x="364.2" y="209.2" fill="#202020" stroke="#202020" stroke-width="0.14" font-size="6.2" text-anchor="start" font-weight="normal">.plot V(SpkrP,SpkrN)</text>
<text x="364.2" y="215.6" fill="#202020" stroke="#202020" stroke-width="0.14" font-size="6.2" text-anchor="start" font-weight="normal">.plot V(IN)</text>
<text x="448.5" y="198.2" fill="#5a3cff" stroke="#5a3cff" stroke-width="0.14" font-size="6.1" text-anchor="start" font-weight="normal">.tran 10/500</text>
<circle cx="554" cy="189.4" r="2" fill="#ff0000"/>
<text x="545" y="189" fill="#ff0000" stroke="#ff0000" stroke-width="0.14" font-size="6.2" text-anchor="start" font-weight="normal">VHIGH</text>
<path d="M554 189.4 L554 212" stroke="#0000ff" stroke-width="2.6" fill="none" stroke-linejoin="miter" stroke-linecap="square"/>
<circle cx="554" cy="200.2" r="4.9" stroke="#0000ff" stroke-width="2.3" fill="#fffde8"/>
<path d="M551.8 198.7 L554 200.7 L556.2 198.7 M551.8 202 h4.4" stroke="#0000ff" stroke-width="1"/>
<path d="M549.5 212 H558.5 L554 217 Z" fill="#0000ff" stroke="#0000ff" stroke-width="1.5" stroke-linejoin="round"/>
<text x="558" y="198" fill="#202020" stroke="#202020" stroke-width="0.14" font-size="6.2" text-anchor="start" font-weight="normal">V1</text>
<text x="558" y="208" fill="#202020" stroke="#202020" stroke-width="0.14" font-size="6.2" text-anchor="start" font-weight="normal">48</text>
<path d="M589.7 207.1 L611.8 207.1 L611.8 214" stroke="#0000ff" stroke-width="2.6" fill="none" stroke-linejoin="miter" stroke-linecap="square"/>
<path d="M607.3 214 H616.3 L611.8 219 Z" fill="#0000ff" stroke="#0000ff" stroke-width="1.5" stroke-linejoin="round"/>
<path d="M589.7 207.1 L589.7 211" stroke="#0000ff" stroke-width="2.6" fill="none" stroke-linejoin="miter" stroke-linecap="square"/>
<path d="M589.7 211 L592.4 212.4 L587 215.2 L592.4 218.1 L587 220.9 L592.4 223.8 L587 226.6 L589.7 228" stroke="#0000ff" stroke-width="2.6" fill="none" stroke-linejoin="miter" stroke-linecap="square"/>
<path d="M589.7 228 L589.7 236" stroke="#0000ff" stroke-width="2.6" fill="none" stroke-linejoin="miter" stroke-linecap="square"/>
<path d="M589.7 236 L592.4 237.3 L587 240 L592.4 242.7 L587 245.3 L592.4 248 L587 250.7 L589.7 252" stroke="#0000ff" stroke-width="2.6" fill="none" stroke-linejoin="miter" stroke-linecap="square"/>
<path d="M589.7 252 L589.7 304" stroke="#0000ff" stroke-width="2.6" fill="none" stroke-linejoin="miter" stroke-linecap="square"/>
<circle cx="589.8" cy="232.2" r="4.4" fill="#0000ff"/>
<text x="594" y="218" fill="#202020" stroke="#202020" stroke-width="0.14" font-size="6.1" text-anchor="start" font-weight="normal">R4</text>
<text x="594" y="229" fill="#202020" stroke="#202020" stroke-width="0.14" font-size="6.1" text-anchor="start" font-weight="normal">12K4</text>
<text x="594" y="243" fill="#202020" stroke="#202020" stroke-width="0.14" font-size="6.1" text-anchor="start" font-weight="normal">R3</text>
<text x="594" y="253" fill="#202020" stroke="#202020" stroke-width="0.14" font-size="6.1" text-anchor="start" font-weight="normal">46K4</text>
<text x="541.7" y="239" fill="#202020" stroke="#202020" stroke-width="0.14" font-size="6.2" text-anchor="start" font-weight="normal">// = 9K785 (R2)</text>
<path d="M382 232.2 L589.8 232.2" stroke="#0000ff" stroke-width="2.6" fill="none" stroke-linejoin="miter" stroke-linecap="square"/>
<path d="M382 232.2 L382 340.1 L408 340.1" stroke="#0000ff" stroke-width="2.6" fill="none" stroke-linejoin="miter" stroke-linecap="square"/>
<path d="M382 246.9 L398 246.9" stroke="#0000ff" stroke-width="2.6" fill="none" stroke-linejoin="miter" stroke-linecap="square"/>
<rect x="396.2" y="241.9" width="3.2" height="10" fill="#0000ff"/>
<rect x="401" y="241.9" width="3.2" height="10" fill="#0000ff"/>
<path d="M402.5 246.9 L418 246.9 L418 278.8" stroke="#0000ff" stroke-width="2.6" fill="none" stroke-linejoin="miter" stroke-linecap="square"/>
<circle cx="382" cy="246.9" r="4.0" fill="#0000ff"/>
<circle cx="382" cy="271.9" r="4.0" fill="#0000ff"/>
<circle cx="382" cy="285.6" r="4.0" fill="#0000ff"/>
<text x="396" y="241" fill="#202020" stroke="#202020" stroke-width="0.14" font-size="6.1" text-anchor="start" font-weight="normal">C1</text>
<text x="397" y="257" fill="#202020" stroke="#202020" stroke-width="0.14" font-size="6.1" text-anchor="start" font-weight="normal">1n</text>
<path d="M362 285.6 L390.7 285.6" stroke="#0000ff" stroke-width="2.6" fill="none" stroke-linejoin="miter" stroke-linecap="square"/>
<circle cx="370" cy="285.6" r="2" fill="#ff0000"/>
<path d="M390.7 263 L411.3 279.2 L390.7 295.5 Z" stroke="#0000ff" stroke-width="2.6" fill="none"/>
<rect x="392.2" y="272.1" width="2.5" height="2.5" fill="#0000ff"/>
<rect x="392.2" y="285.8" width="2.5" height="2.5" fill="#0000ff"/>
<path d="M400 282.2 h5" stroke="#7a7a90" stroke-width="0.6"/>
<path d="M400 284.8 h5" stroke="#7a7a90" stroke-width="0.6"/>
<path d="M400 287.2 h5" stroke="#7a7a90" stroke-width="0.6"/>
<path d="M395.5 293.9 H404.5 L400 298.9 Z" fill="#0000ff" stroke="#0000ff" stroke-width="1.5" stroke-linejoin="round"/>
<circle cx="418.2" cy="278.8" r="4.0" fill="#0000ff"/>
<text x="401" y="269" fill="#202020" stroke="#202020" stroke-width="0.14" font-size="6.1" text-anchor="start" font-weight="normal">U1</text>
<circle cx="397" cy="262" r="2" fill="#ff0000"/>
<text x="393" y="262" fill="#ff0000" stroke="#ff0000" stroke-width="0.14" font-size="6.2" text-anchor="start" font-weight="normal">Vdd</text>
<path d="M375.3 228.7 H425.8 V314.6 H375.3 Z" stroke="#0000ff" stroke-width="2.4" fill="none" stroke-dasharray="0.1 4.4" stroke-linecap="round"/>
<text x="382" y="230.5" fill="#202020" stroke="#202020" stroke-width="0.14" font-size="6.2" text-anchor="start" font-weight="normal">IC=Vdd/2</text>
<text x="386" y="311" fill="#5a3cff" stroke="#5a3cff" stroke-width="0.14" font-size="6.1" text-anchor="start" font-weight="normal">Integrator</text>
<text x="428" y="280" fill="#ff0000" stroke="#ff0000" stroke-width="0.14" font-size="6.2" text-anchor="start" font-weight="normal">integ</text>
<path d="M408 340.1 L409.1 337.4 L411.2 342.8 L413.4 337.4 L415.6 342.8 L417.8 337.4 L419.9 342.8 L421 340.1" stroke="#0000ff" stroke-width="2.6" fill="none" stroke-linejoin="miter" stroke-linecap="square"/>
<path d="M421 340.1 L479.7 340.1" stroke="#0000ff" stroke-width="2.6" fill="none" stroke-linejoin="miter" stroke-linecap="square"/>
<path d="M479.7 340.1 L480.8 337.4 L483.1 342.8 L485.4 337.4 L487.8 342.8 L490.1 337.4 L492.4 342.8 L493.5 340.1" stroke="#0000ff" stroke-width="2.6" fill="none" stroke-linejoin="miter" stroke-linecap="square"/>
<path d="M493.5 340.1 L515 340.1" stroke="#0000ff" stroke-width="2.6" fill="none" stroke-linejoin="miter" stroke-linecap="square"/>
<text x="410" y="334" fill="#202020" stroke="#202020" stroke-width="0.14" font-size="6.1" text-anchor="start" font-weight="normal">R8</text>
<text x="408" y="349" fill="#202020" stroke="#202020" stroke-width="0.14" font-size="6.1" text-anchor="start" font-weight="normal">1K6</text>
<text x="480" y="334" fill="#202020" stroke="#202020" stroke-width="0.14" font-size="6.1" text-anchor="start" font-weight="normal">R15</text>
<text x="480" y="349" fill="#202020" stroke="#202020" stroke-width="0.14" font-size="6.1" text-anchor="start" font-weight="normal">46K4</text>
<text x="427" y="348" fill="#5a3cff" stroke="#5a3cff" stroke-width="0.14" font-size="6.2" text-anchor="start" font-weight="normal">Hysteresis network</text>
<circle cx="443.4" cy="340.1" r="4.0" fill="#0000ff"/>
<circle cx="515" cy="340.1" r="4.0" fill="#0000ff"/>
<path d="M443.4 340.1 L443.4 279.3 L515 279.3 L515 375.5 L548 375.5" stroke="#0000ff" stroke-width="2.6" fill="none" stroke-linejoin="miter" stroke-linecap="square"/>
<path d="M418.2 278.8 L432.6 279 L432.6 293 L471.9 293" stroke="#0000ff" stroke-width="2.6" fill="none" stroke-linejoin="miter" stroke-linecap="square"/>
<path d="M449.3 235.6 H513.1 V325.4 H449.3 Z" stroke="#0000ff" stroke-width="2.4" fill="none" stroke-dasharray="0.1 4.4" stroke-linecap="round"/>
<text x="472" y="241.5" fill="#5a3cff" stroke="#5a3cff" stroke-width="0.14" font-size="6.1" text-anchor="start" font-weight="normal">Comparator</text>
<circle cx="474" cy="232" r="2" fill="#ff0000"/>
<text x="467" y="230" fill="#ff0000" stroke="#ff0000" stroke-width="0.14" font-size="6.2" text-anchor="start" font-weight="normal">Feedback</text>
<path d="M458.2 269.4 H497.4 V302.8 H458.2 Z" stroke="#ff0000" stroke-width="2.2" fill="none" stroke-dasharray="0.1 3.8" stroke-linecap="round"/>
<path d="M471.9 275.3 L490.5 286 L471.9 297 Z" stroke="#0000ff" stroke-width="2.6" fill="none"/>
<path d="M446.4 264.5 L478.8 264.5 L478.8 278" stroke="#0000ff" stroke-width="2.6" fill="none" stroke-linejoin="miter" stroke-linecap="square"/>
<path d="M464.4 264.5 L464.4 285.2 L471.9 285.2" stroke="#0000ff" stroke-width="2.6" fill="none" stroke-linejoin="miter" stroke-linecap="square"/>
<circle cx="464.4" cy="264.5" r="4.0" fill="#0000ff"/>
<circle cx="446.4" cy="264.5" r="2" fill="#ff0000"/>
<text x="438" y="267" fill="#ff0000" stroke="#ff0000" stroke-width="0.14" font-size="6.2" text-anchor="start" font-weight="normal">Vdd</text>
<text x="485" y="279" fill="#202020" stroke="#202020" stroke-width="0.14" font-size="6.2" text-anchor="start" font-weight="normal">U?</text>
<path d="M490.5 286 L500.4 286 L500.4 264.5 L528.8 264.5 L528.8 293 L550.5 293" stroke="#0000ff" stroke-width="2.6" fill="none" stroke-linejoin="miter" stroke-linecap="square"/>
<path d="M478.8 297 L478.8 307.7 L457.2 307.7 L457.2 318" stroke="#0000ff" stroke-width="2.6" fill="none" stroke-linejoin="miter" stroke-linecap="square"/>
<path d="M452.7 318 H461.7 L457.2 323 Z" fill="#0000ff" stroke="#0000ff" stroke-width="1.5" stroke-linejoin="round"/>
<path d="M503 300 L507.2 300 L507.2 318" stroke="#0000ff" stroke-width="2.6" fill="none" stroke-linejoin="miter" stroke-linecap="square"/>
<circle cx="507.2" cy="307.7" r="4.0" fill="#0000ff"/>
<path d="M502.7 318 H511.7 L507.2 323 Z" fill="#0000ff" stroke="#0000ff" stroke-width="1.5" stroke-linejoin="round"/>
<circle cx="529" cy="293" r="2" fill="#ff0000"/>
<text x="522" y="300" fill="#ff0000" stroke="#ff0000" stroke-width="0.14" font-size="6.2" text-anchor="start" font-weight="normal">comp</text>
<path d="M538 256.8 H573.9 V332 H538 Z" stroke="#0000ff" stroke-width="2.4" fill="none" stroke-dasharray="0.1 4.4" stroke-linecap="round"/>
<path d="M538 339.9 H573.9 V414 H538 Z" stroke="#0000ff" stroke-width="2.4" fill="none" stroke-dasharray="0.1 4.4" stroke-linecap="round"/>
<text x="543" y="266" fill="#5a3cff" stroke="#5a3cff" stroke-width="0.14" font-size="6.1" text-anchor="start" font-weight="normal">Power</text>
<text x="543" y="273" fill="#5a3cff" stroke="#5a3cff" stroke-width="0.14" font-size="6.1" text-anchor="start" font-weight="normal">Amplifier 1</text>
<text x="543" y="349" fill="#5a3cff" stroke="#5a3cff" stroke-width="0.14" font-size="6.1" text-anchor="start" font-weight="normal">Power</text>
<text x="543" y="356" fill="#5a3cff" stroke="#5a3cff" stroke-width="0.14" font-size="6.1" text-anchor="start" font-weight="normal">Amplifier 2</text>
<circle cx="554" cy="282.7" r="2" fill="#ff0000"/>
<text x="546" y="283" fill="#ff0000" stroke="#ff0000" stroke-width="0.14" font-size="6.2" text-anchor="start" font-weight="normal">VHIGH</text>
<path d="M554 282.7 L554 290 L550 293 L550 315 L556 318" stroke="#0000ff" stroke-width="2.6" fill="none" stroke-linejoin="miter" stroke-linecap="square"/>
<path d="M554 293 L554 304 L556 304" stroke="#0000ff" stroke-width="2.6" fill="none" stroke-linejoin="miter" stroke-linecap="square"/>
<path d="M547 293 L547 310" stroke="#0000ff" stroke-width="2.6" fill="none" stroke-linejoin="miter" stroke-linecap="square"/>
<path d="M542.5 310 H551.5 L547 315 Z" fill="#0000ff" stroke="#0000ff" stroke-width="1.5" stroke-linejoin="round"/>
<path d="M556 304 L556 325" stroke="#0000ff" stroke-width="2.6" fill="none" stroke-linejoin="miter" stroke-linecap="square"/>
<path d="M551.5 325 H560.5 L556 330 Z" fill="#0000ff" stroke="#0000ff" stroke-width="1.5" stroke-linejoin="round"/>
<circle cx="554.5" cy="315" r="2.5" fill="#0000ff"/>
<text x="558" y="288" fill="#202020" stroke="#202020" stroke-width="0.14" font-size="6.2" text-anchor="start" font-weight="normal">X2</text>
<text x="563" y="301" fill="#ff0000" stroke="#ff0000" stroke-width="0.14" font-size="6.2" text-anchor="start" font-weight="normal">PWM</text>
<circle cx="554" cy="365.1" r="2" fill="#ff0000"/>
<text x="546" y="365.4" fill="#ff0000" stroke="#ff0000" stroke-width="0.14" font-size="6.2" text-anchor="start" font-weight="normal">VHIGH</text>
<path d="M554 365.1 L554 372.4 L550 375.4 L550 397.4 L556 400.4" stroke="#0000ff" stroke-width="2.6" fill="none" stroke-linejoin="miter" stroke-linecap="square"/>
<path d="M554 375.4 L554 386.4 L556 386.4" stroke="#0000ff" stroke-width="2.6" fill="none" stroke-linejoin="miter" stroke-linecap="square"/>
<path d="M547 375.4 L547 392.4" stroke="#0000ff" stroke-width="2.6" fill="none" stroke-linejoin="miter" stroke-linecap="square"/>
<path d="M542.5 392.4 H551.5 L547 397.4 Z" fill="#0000ff" stroke="#0000ff" stroke-width="1.5" stroke-linejoin="round"/>
<path d="M556 386.4 L556 407.4" stroke="#0000ff" stroke-width="2.6" fill="none" stroke-linejoin="miter" stroke-linecap="square"/>
<path d="M551.5 407.4 H560.5 L556 412.4 Z" fill="#0000ff" stroke="#0000ff" stroke-width="1.5" stroke-linejoin="round"/>
<circle cx="554.5" cy="397.4" r="2.5" fill="#0000ff"/>
<text x="558" y="370.4" fill="#202020" stroke="#202020" stroke-width="0.14" font-size="6.2" text-anchor="start" font-weight="normal">X4</text>
<text x="563" y="383.4" fill="#ff0000" stroke="#ff0000" stroke-width="0.14" font-size="6.2" text-anchor="start" font-weight="normal">PWM</text>
<path d="M556 304 L596 304" stroke="#0000ff" stroke-width="2.6" fill="none" stroke-linejoin="miter" stroke-linecap="square"/>
<path d="M612 304 L705.2 304 L705.2 338.8" stroke="#0000ff" stroke-width="2.6" fill="none" stroke-linejoin="miter" stroke-linecap="square"/>
<path d="M553.7 386.4 L596 386.4" stroke="#0000ff" stroke-width="2.6" fill="none" stroke-linejoin="miter" stroke-linecap="square"/>
<path d="M612 386.4 L705.2 386.4 L705.2 350" stroke="#0000ff" stroke-width="2.6" fill="none" stroke-linejoin="miter" stroke-linecap="square"/>
<path d="M598 304 a3.2 3.2 0 0 0 6.4 0 a3.2 3.2 0 0 0 6.4 0" stroke="#0000ff" stroke-width="2.2" fill="none"/>
<path d="M598 386.4 a3.2 3.2 0 0 0 6.4 0 a3.2 3.2 0 0 0 6.4 0" stroke="#0000ff" stroke-width="2.2" fill="none"/>
<text x="602" y="298" fill="#202020" stroke="#202020" stroke-width="0.14" font-size="6.1" text-anchor="start" font-weight="normal">L1</text>
<text x="600" y="313" fill="#202020" stroke="#202020" stroke-width="0.14" font-size="6.1" text-anchor="start" font-weight="normal">10µ</text>
<text x="602" y="381" fill="#202020" stroke="#202020" stroke-width="0.14" font-size="6.1" text-anchor="start" font-weight="normal">L2</text>
<text x="600" y="395" fill="#202020" stroke="#202020" stroke-width="0.14" font-size="6.1" text-anchor="start" font-weight="normal">10µ</text>
<circle cx="622.1" cy="304" r="4.0" fill="#0000ff"/>
<circle cx="622.1" cy="386.4" r="4.0" fill="#0000ff"/>
<circle cx="650.2" cy="304" r="4.0" fill="#0000ff"/>
<circle cx="650.2" cy="386.4" r="4.0" fill="#0000ff"/>
<circle cx="672.6" cy="304" r="4.0" fill="#0000ff"/>
<circle cx="672.6" cy="386.4" r="4.0" fill="#0000ff"/>
<circle cx="589.8" cy="304" r="4.0" fill="#0000ff"/>
<circle cx="632" cy="305" r="2" fill="#ff0000"/>
<text x="626" y="302" fill="#ff0000" stroke="#ff0000" stroke-width="0.14" font-size="6.2" text-anchor="start" font-weight="normal">SpkrP</text>
<circle cx="632" cy="386.4" r="2" fill="#ff0000"/>
<text x="626" y="384" fill="#ff0000" stroke="#ff0000" stroke-width="0.14" font-size="6.2" text-anchor="start" font-weight="normal">SpkrN</text>
<path d="M622.1 304 L622.1 342.4" stroke="#0000ff" stroke-width="2.6" fill="none" stroke-linejoin="miter" stroke-linecap="square"/>
<rect x="616.6" y="339.7" width="11" height="3.2" fill="#0000ff"/>
<rect x="616.6" y="344.5" width="11" height="3.2" fill="#0000ff"/>
<path d="M622.1 345 L622.1 386.4" stroke="#0000ff" stroke-width="2.6" fill="none" stroke-linejoin="miter" stroke-linecap="square"/>
<text x="626" y="341" fill="#202020" stroke="#202020" stroke-width="0.14" font-size="6.1" text-anchor="start" font-weight="normal">C2</text>
<text x="626" y="351" fill="#202020" stroke="#202020" stroke-width="0.14" font-size="6.1" text-anchor="start" font-weight="normal">330n</text>
<path d="M650.2 304 L650.2 315.2" stroke="#0000ff" stroke-width="2.6" fill="none" stroke-linejoin="miter" stroke-linecap="square"/>
<path d="M650.2 315.2 L652.9 316.3 L647.5 318.6 L652.9 320.8 L647.5 323.1 L652.9 325.3 L647.5 327.6 L650.2 328.7" stroke="#0000ff" stroke-width="2.6" fill="none" stroke-linejoin="miter" stroke-linecap="square"/>
<path d="M650.2 328.7 L650.2 357" stroke="#0000ff" stroke-width="2.6" fill="none" stroke-linejoin="miter" stroke-linecap="square"/>
<rect x="644.7" y="354.3" width="11" height="3.2" fill="#0000ff"/>
<rect x="644.7" y="359.1" width="11" height="3.2" fill="#0000ff"/>
<path d="M650.2 359.6 L650.2 386.4" stroke="#0000ff" stroke-width="2.6" fill="none" stroke-linejoin="miter" stroke-linecap="square"/>
<text x="655" y="320" fill="#202020" stroke="#202020" stroke-width="0.14" font-size="6.1" text-anchor="start" font-weight="normal">R2</text>
<text x="655" y="331" fill="#202020" stroke="#202020" stroke-width="0.14" font-size="6.1" text-anchor="start" font-weight="normal">5.5</text>
<text x="655" y="355" fill="#202020" stroke="#202020" stroke-width="0.14" font-size="6.1" text-anchor="start" font-weight="normal">C11</text>
<text x="655" y="365" fill="#202020" stroke="#202020" stroke-width="0.14" font-size="6.1" text-anchor="start" font-weight="normal">150n</text>
<path d="M672.6 304 L672.6 337.6" stroke="#0000ff" stroke-width="2.6" fill="none" stroke-linejoin="miter" stroke-linecap="square"/>
<path d="M672.6 337.6 L675.3 338.6 L669.9 340.7 L675.3 342.8 L669.9 344.8 L675.3 346.9 L669.9 349 L672.6 350" stroke="#0000ff" stroke-width="2.6" fill="none" stroke-linejoin="miter" stroke-linecap="square"/>
<path d="M672.6 350 L672.6 386.4" stroke="#0000ff" stroke-width="2.6" fill="none" stroke-linejoin="miter" stroke-linecap="square"/>
<text x="675" y="335" fill="#5a3cff" stroke="#5a3cff" stroke-width="0.14" font-size="6.1" text-anchor="start" font-weight="normal">Speaker</text>
<text x="677" y="341" fill="#202020" stroke="#202020" stroke-width="0.14" font-size="6.1" text-anchor="start" font-weight="normal">R7</text>
<text x="677" y="349" fill="#202020" stroke="#202020" stroke-width="0.14" font-size="6.1" text-anchor="start" font-weight="normal">6</text>
<text transform="translate(653.5,299.5) rotate(-90)" fill="#5a3cff" font-size="6.4">Zobel network</text>
<text x="590" y="328.6" fill="#5a3cff" stroke="#5a3cff" stroke-width="0.14" font-size="6.1" text-anchor="start" font-weight="normal">L-C  LPFs</text>
<circle cx="712" cy="343.3" r="4.6" stroke="#0000ff" stroke-width="2.3" fill="#fffde8"/>
<path d="M709.8 341.8 L712 343.8 L714.2 341.8 M709.8 345.1 h4.4" stroke="#0000ff" stroke-width="1"/>
<path d="M707.5 349 H716.5 L712 354 Z" fill="#0000ff" stroke="#0000ff" stroke-width="1.5" stroke-linejoin="round"/>
<circle cx="711" cy="336.5" r="2" fill="#ff0000"/>
<text x="705" y="335" fill="#ff0000" stroke="#ff0000" stroke-width="0.14" font-size="6.2" text-anchor="start" font-weight="normal">Spkr</text>
</g></svg>
</div>
<div class="abs" style="left:730px;top:4px;width:2px;height:450px;background:#e8e8ec"></div>
<div class="abs" style="left:0;top:453px;width:732px;height:2px;background:#f8f8fc"></div>
<div class="abs" style="left:0;top:455px;width:732px;height:4px;background:#e6e9f5"></div>
<!-- output window header -->
<div class="abs" style="left:1px;top:459px;width:731px;height:29px;background:linear-gradient(to bottom,#bccada,#d4e1ef)"></div>
<div class="abs" style="left:5px;top:465px;font-size:14.5px;color:#1e1e3c;">Output Window</div>
<svg class="abs" style="left:695px;top:466px" width="36" height="16">
<path d="M2 4 H13 L7.5 10 Z" fill="#111"/>
<path d="M21 2.5 L30 11.5 M30 2.5 L21 11.5" stroke="#111" stroke-width="2"/>
</svg>
<!-- output content -->
<div class="abs" style="left:1px;top:488px;width:731px;height:191px;background:#eeeeee;border-top:1px solid #6e6e6e;border-left:1px solid #8a8a8a;border-bottom:1px solid #7a7a7a;box-sizing:border-box"></div>
<div class="abs" style="left:2px;top:489px;width:707px;height:169px;background:#f4f4f4"></div>
<div class="abs" style="left:709px;top:489px;width:23px;height:169px;background:linear-gradient(to right,#f0f0f0,#dedede)"></div>
<div class="abs" style="left:716.5px;top:512.5px;width:3.5px;height:21px;background:#8c8c8c;border-radius:2px"></div>
<div class="abs" style="left:25px;top:665.5px;width:449px;height:3px;background:#8c8c8c;border-radius:2px"></div>
<div class="abs" style="left:14px;top:495px;width:695px;height:165px;overflow:hidden;font-family:'Liberation Mono',monospace;font-weight:bold;font-size:19.6px;letter-spacing:0.2px;color:#000;"><div class="ln">C:\Users\kskel\Downloads\FRA\SOC-D_amplifier_(complete,_BT</div><div class="ln">X5:&nbsp;Frequency&nbsp;Response&nbsp;Analyer&nbsp;by&nbsp;KSKelvin&nbsp;-&nbsp;Setup&nbsp;Informa</div><div class="ln">X5:&nbsp;&nbsp;&nbsp;Frequency:&nbsp;20Hz&nbsp;to&nbsp;100000Hz&nbsp;(log&nbsp;sweep,&nbsp;10&nbsp;steps&nbsp;per</div><div class="ln">X5:&nbsp;&nbsp;&nbsp;Amplitude:&nbsp;1.00V@fstart&nbsp;to&nbsp;1.00V@1000Hz&nbsp;to&nbsp;1.00V@fst</div><div class="ln">X5:&nbsp;&nbsp;&nbsp;Measurement:&nbsp;0&nbsp;pre-cycles&nbsp;(stabilization)&nbsp;+&nbsp;1&nbsp;averag</div><div class="ln">X5:&nbsp;&nbsp;&nbsp;Option&nbsp;[Auto&nbsp;]:&nbsp;Adjust&nbsp;averaging&nbsp;cycles&nbsp;according&nbsp;to</div><div class="ln">X5:&nbsp;&nbsp;&nbsp;Option&nbsp;[Limit]:&nbsp;Limit&nbsp;test&nbsp;steps&nbsp;when&nbsp;frequency&nbsp;&lt;&nbsp;20</div><div class="ln">X5:&nbsp;&nbsp;&nbsp;Option&nbsp;[Plot&nbsp;]:&nbsp;Auto-generate&nbsp;Bode&nbsp;plot&nbsp;post-simulat</div></div>
<!-- tab bar -->
<div class="abs" style="left:0;top:679px;width:732px;height:30px;background:#f0f0f0"></div>
<svg class="abs" style="left:0;top:679px" width="732" height="30">
<path d="M7.3 9 V18" stroke="#222" stroke-width="1.5"/><path d="M14.5 9 L8.5 13.5 L14.5 18 Z" fill="#222"/>
<path d="M32 9.5 L27 13.5 L32 17.5 Z" fill="#222"/>
<path d="M45.5 9.5 L50.5 13.5 L45.5 17.5 Z" fill="#222"/>
<path d="M62 9 L68 13.5 L62 18 Z" fill="#222"/><path d="M69.3 9 V18" stroke="#222" stroke-width="1.5"/>
<path d="M173 0 L187 0 L270 0 L257.5 25.5 L174 25.5 L166 13 Z" fill="#f0f0f0" stroke="#808080" stroke-width="1"/>
<path d="M76.5 -0.5 L90 25.5 L160 25.5 L173.5 -0.5" fill="#ffffff" stroke="#808080" stroke-width="1"/>
<path d="M77 0 H173" stroke="#ffffff" stroke-width="1.5"/>
<text x="89" y="17.5" font-family="Liberation Sans, sans-serif" font-size="14" font-weight="bold" fill="#000">Simulation</text>
<text x="177.5" y="17.5" font-family="Liberation Sans, sans-serif" font-size="12.8" fill="#000">Post Process</text>
</svg>
<div class="abs" style="left:0;top:708px;width:732px;height:5px;background:#f4f4f4;border-top:1px solid #d0d0d0;box-sizing:border-box"></div>
<!-- dividers -->
<div class="abs" style="left:732px;top:0;width:2px;height:713px;background:#8a6a4e"></div>
<div class="abs" style="left:734px;top:2px;width:2px;height:711px;background:#b4b4b4"></div>
<!-- middle panel -->
<div class="abs" style="left:736px;top:3px;width:578px;height:706px;background:#000"></div>
<div class="abs" style="left:736px;top:3px;width:578px;height:341px;border:1px dotted #fff;box-sizing:border-box"></div>
<div class="abs" style="left:1314px;top:2px;width:2px;height:711px;background:#c8c8c8"></div>
<div class="abs" style="left:1316px;top:0;width:2px;height:713px;background:#8a6a4e"></div>
<div class="abs" style="left:1318px;top:2px;width:1.5px;height:711px;background:#b4b4b4"></div>
<!-- right panel -->
<div class="abs" style="left:1319.5px;top:3px;width:578.5px;height:707px;background:#000;border:1px dotted #fff;border-right:none;box-sizing:border-box"></div>
<div class="abs" style="left:736px;top:709px;width:1162px;height:4px;background:#f0f0f0"></div>
<svg style="position:absolute;left:0;top:0" width="1898" height="713">
<g stroke="#c8c8c8" stroke-width="2.4" fill="none">
<path d="M1279.5 15.0 H839.5 V332.5 H1279.5 V15.0"/>
<path d="M827.5 15 H839.5"/>
<path d="M827.5 46.8 H839.5"/>
<path d="M827.5 78.5 H839.5"/>
<path d="M827.5 110.2 H839.5"/>
<path d="M827.5 142 H839.5"/>
<path d="M827.5 173.8 H839.5"/>
<path d="M827.5 205.5 H839.5"/>
<path d="M827.5 237.2 H839.5"/>
<path d="M827.5 269 H839.5"/>
<path d="M827.5 300.8 H839.5"/>
<path d="M827.5 332.5 H839.5"/>
</g>
<g fill="#dcdcd4" font-family="Liberation Sans, sans-serif" font-size="19" text-anchor="end">
<text x="826" y="21.5">1.0V</text>
<text x="826" y="53.2">0.8V</text>
<text x="826" y="85">0.6V</text>
<text x="826" y="116.8">0.4V</text>
<text x="826" y="148.5">0.2V</text>
<text x="826" y="180.2">-0.0V</text>
<text x="826" y="212">-0.2V</text>
<text x="826" y="243.8">-0.4V</text>
<text x="826" y="275.5">-0.6V</text>
<text x="826" y="307.2">-0.8V</text>
<text x="826" y="339">-1.0V</text>
</g>
<path d="M839.5 173.8 L841 164.2 L842.5 154.6 L844.1 145.1 L845.6 135.8 L847.1 126.5 L848.6 117.5 L850.2 108.6 L851.7 100 L853.2 91.6 L854.7 83.6 L856.3 75.8 L857.8 68.5 L859.3 61.5 L860.8 54.9 L862.3 48.8 L863.9 43.1 L865.4 37.9 L866.9 33.2 L868.4 29 L870 25.3 L871.5 22.2 L873 19.6 L874.5 17.6 L876.1 16.2 L877.6 15.3 L879.1 15 L880.1 15.1 L881.1 15.5 L882.1 16.1 L883.1 17 L884.1 18.1 L885.1 19.4 L886.1 21 L887.1 22.8 L888.2 24.8 L889.2 27.1 L890.2 29.6 L891.2 32.3 L892.2 35.2 L893.2 38.4 L894.2 41.8 L895.2 45.3 L896.2 49.1 L897.2 53 L898.2 57.2 L899.2 61.5 L900.2 66 L901.2 70.7 L902.2 75.5 L903.2 80.4 L904.3 85.6 L905.3 90.8 L906.3 96.2 L907.3 101.7 L908.3 107.3 L909.3 113 L910.3 118.8 L911.3 124.7 L912.3 130.7 L913.3 136.7 L914.3 142.8 L915.3 148.9 L916.3 155.1 L917.3 161.3 L918.3 167.5 L919.4 173.7 L920.4 180 L921.4 186.2 L922.4 192.4 L923.4 198.6 L924.4 204.7 L925.4 210.8 L926.4 216.8 L927.4 222.8 L928.4 228.7 L929.4 234.5 L930.4 240.2 L931.4 245.8 L932.4 251.3 L933.4 256.7 L934.4 261.9 L935.5 267.1 L936.5 272 L937.5 276.8 L938.5 281.5 L939.5 286 L940.5 290.3 L941.5 294.5 L942.5 298.4 L943.5 302.2 L944.5 305.7 L945.5 309.1 L946.5 312.3 L947.5 315.2 L948.5 317.9 L949.5 320.4 L950.5 322.7 L951.6 324.7 L952.6 326.5 L953.6 328.1 L954.6 329.4 L955.6 330.5 L956.6 331.4 L957.6 332 L958.6 332.4 L959.6 332.5 L960.6 332.3 L961.6 331.7 L962.6 330.7 L963.6 329.3 L964.6 327.4 L965.6 325.2 L966.6 322.6 L967.6 319.6 L968.6 316.3 L969.6 312.6 L970.6 308.5 L971.6 304 L972.6 299.3 L973.6 294.2 L974.6 288.8 L975.6 283.1 L976.6 277.2 L977.6 270.9 L978.6 264.4 L979.6 257.7 L980.6 250.8 L981.6 243.7 L982.6 236.4 L983.6 228.9 L984.6 221.3 L985.6 213.5 L986.6 205.7 L987.6 197.8 L988.6 189.8 L989.6 181.8 L990.6 173.8 L991.6 165.7 L992.6 157.7 L993.6 149.7 L994.6 141.8 L995.6 134 L996.6 126.2 L997.6 118.6 L998.6 111.1 L999.6 103.8 L1000.6 96.7 L1001.6 89.8 L1002.6 83.1 L1003.6 76.6 L1004.6 70.3 L1005.6 64.4 L1006.6 58.7 L1007.6 53.3 L1008.6 48.2 L1009.6 43.5 L1010.6 39 L1011.6 34.9 L1012.6 31.2 L1013.6 27.9 L1014.6 24.9 L1015.6 22.3 L1016.6 20.1 L1017.6 18.2 L1018.6 16.8 L1019.6 15.8 L1020.6 15.2 L1021.6 15 L1022.6 15.5 L1023.7 17.1 L1024.7 19.6 L1025.7 23.2 L1026.7 27.7 L1027.8 33.2 L1028.8 39.6 L1029.8 46.8 L1030.8 54.9 L1031.9 63.8 L1032.9 73.3 L1033.9 83.6 L1034.9 94.4 L1036 105.7 L1037 117.5 L1038 129.6 L1039 142 L1040.1 154.6 L1041.1 167.4 L1042.1 180.1 L1043.1 192.9 L1044.2 205.5 L1045.2 217.9 L1046.2 230 L1047.2 241.8 L1048.3 253.1 L1049.3 263.9 L1050.3 274.2 L1051.3 283.7 L1052.4 292.6 L1053.4 300.7 L1054.4 307.9 L1055.4 314.3 L1056.5 319.8 L1057.5 324.3 L1058.5 327.9 L1059.5 330.4 L1060.6 332 L1061.6 332.5 L1062.6 331.6 L1063.7 329 L1064.7 324.7 L1065.7 318.8 L1066.7 311.2 L1067.8 302.2 L1068.8 291.7 L1069.8 280 L1070.8 267.1 L1071.9 253.1 L1072.9 238.3 L1073.9 222.8 L1074.9 206.8 L1076 190.3 L1077 173.8 L1078 157.2 L1079.1 140.7 L1080.1 124.7 L1081.1 109.2 L1082.1 94.4 L1083.2 80.4 L1084.2 67.5 L1085.2 55.8 L1086.2 45.3 L1087.3 36.3 L1088.3 28.7 L1089.3 22.8 L1090.3 18.5 L1091.4 15.9 L1092.4 15 L1093.4 17 L1094.4 22.8 L1095.4 32.3 L1096.4 45.3 L1097.4 61.5 L1098.4 80.4 L1099.4 101.7 L1100.4 124.7 L1101.4 148.9 L1102.5 173.7 L1103.5 198.6 L1104.5 222.8 L1105.5 245.8 L1106.5 267.1 L1107.5 286 L1108.5 302.2 L1109.5 315.2 L1110.5 324.7 L1111.5 330.5 L1112.5 332.5 L1113.6 328.5 L1114.6 316.8 L1115.7 297.9 L1116.8 272.7 L1117.8 242.6 L1118.9 209.1 L1120 173.8 L1121 138.4 L1122.1 104.9 L1123.1 74.8 L1124.2 49.6 L1125.3 30.7 L1126.3 19 L1127.4 15 L1128.4 22.8 L1129.5 45.3 L1130.5 80.4 L1131.5 124.7 L1132.6 173.7 L1133.6 222.8 L1134.6 267.1 L1135.6 302.2 L1136.7 324.7 L1137.7 332.5 L1138.8 316.8 L1139.9 272.7 L1141 209.1 L1142 138.4 L1143.1 74.8 L1144.2 30.7 L1145.3 15 L1146.3 45.3 L1147.4 124.7 L1148.4 222.8 L1149.5 302.2 L1150.5 332.5 L1151.6 286 L1152.8 173.8 L1153.9 61.5 L1155 15 L1156 61.5 L1157 173.7 L1158.1 286 L1159.1 332.5 L1160.3 253.1 L1161.5 94.4 L1162.7 15 L1163.8 94.4 L1164.9 253.1 L1166 332.5 L1167.2 253.1 L1168.3 94.4 L1169.5 15 L1170.5 94.4 L1171.4 253.1 L1172.4 332.5 L1173.4 253.1 L1174.4 94.4 L1175.4 15 L1176.2 94.4 L1177 253.1 L1177.8 332.5 L1178.7 253.1 L1179.6 94.4 L1180.5 15 L1181.2 94.4 L1182 253.1 L1182.7 332.5 L1183.6 253.1 L1184.5 94.4 L1185.4 15 L1186 94.4 L1186.7 253.1 L1187.3 332.5 L1188.1 253.1 L1188.8 94.4 L1189.6 15 L1190.3 94.4 L1191 253.1 L1191.7 332.5 L1192.4 253.1 L1193.1 94.4 L1193.7 15 L1194.4 94.4 L1195.1 253.1 L1195.7 332.5 L1196.4 253.1 L1197 94.4 L1197.6 15 L1198.2 94.4 L1198.9 253.1 L1199.5 332.5 L1200.1 253.1 L1200.7 94.4 L1201.3 15 L1201.9 94.4 L1202.5 253.1 L1203 332.5 L1203.6 253.1 L1204.2 94.4 L1204.7 15 L1205.3 94.4 L1205.8 253.1 L1206.4 332.5 L1206.9 253.1 L1207.4 94.4 L1208 15 L1208.5 94.4 L1209 253.1 L1209.5 332.5 L1210 253.1 L1210.6 94.4 L1211.1 15 L1211.6 94.4 L1212.1 253.1 L1212.6 332.5 L1213.1 253.1 L1213.7 94.4 L1214.2 15" stroke="#0040ff" stroke-width="2.9" fill="none"/>
<rect x="1192" y="17" width="88.5" height="313" fill="#0040ff"/><rect x="1212" y="14" width="68.5" height="319" fill="#0040ff"/>
<g stroke="#c8c8c8" stroke-width="2.4" fill="none">
<path d="M1279.5 356.7 H839.5 V673.4 H1279.5 V356.7"/>
<path d="M827.5 356.7 H839.5"/>
<path d="M827.5 388.4 H839.5"/>
<path d="M827.5 420 H839.5"/>
<path d="M827.5 451.7 H839.5"/>
<path d="M827.5 483.4 H839.5"/>
<path d="M827.5 515 H839.5"/>
<path d="M827.5 546.7 H839.5"/>
<path d="M827.5 578.4 H839.5"/>
<path d="M827.5 610.1 H839.5"/>
<path d="M827.5 641.7 H839.5"/>
<path d="M827.5 673.4 H839.5"/>
<path d="M839.3 673.4 V681.5"/>
<path d="M936.7 673.4 V681.5"/>
<path d="M1034.1 673.4 V681.5"/>
<path d="M1131.5 673.4 V681.5"/>
<path d="M1228.9 673.4 V681.5"/>
</g>
<g fill="#dcdcd4" font-family="Liberation Sans, sans-serif" font-size="19" text-anchor="end">
<text x="826" y="363.2">50V</text>
<text x="826" y="394.9">39V</text>
<text x="826" y="426.5">28V</text>
<text x="826" y="458.2">17V</text>
<text x="826" y="489.9">6V</text>
<text x="826" y="521.5">-5V</text>
<text x="826" y="553.2">-16V</text>
<text x="826" y="584.9">-27V</text>
<text x="826" y="616.6">-38V</text>
<text x="826" y="648.2">-49V</text>
<text x="826" y="679.9">-60V</text>
</g>
<g fill="#dcdcd4" font-family="Liberation Sans, sans-serif" font-size="19" text-anchor="middle">
<text x="839.3" y="701.5">0ms</text>
<text x="936.7" y="701.5">30ms</text>
<text x="1034.1" y="701.5">60ms</text>
<text x="1131.5" y="701.5">90ms</text>
<text x="1228.9" y="701.5">120ms</text>
</g>
<defs><path id="gw" d="M839.6 500.9 C 845 510, 852 516, 861.2 516.3 C 880 516, 905 480, 927.6 477 C 950 477, 985 520, 1000.9 527.2 C 1004 530, 1007 537, 1011.7 537.4 C 1022 537, 1036 485, 1053.9 466.2 L1053.9 466.2 L1054.9 466.4 L1055.9 466.8 L1057 467.6 L1058 468.7 L1059 470.1 L1060 471.7 L1061.1 473.6 L1062.1 475.8 L1063.1 478.2 L1064.1 480.9 L1065.2 483.7 L1066.2 486.7 L1067.2 489.8 L1068.2 493.1 L1069.2 496.5 L1070.3 499.9 L1071.3 503.4 L1072.3 506.9 L1073.3 510.4 L1074.4 513.8 L1075.4 517.2 L1076.4 520.5 L1077.4 523.6 L1078.4 526.6 L1079.5 529.4 L1080.5 532.1 L1081.5 534.5 L1082.5 536.7 L1083.6 538.6 L1084.6 540.2 L1085.6 541.6 L1086.6 542.7 L1087.7 543.5 L1088.7 543.9 L1089.7 544.1 L1090.7 543.7 L1091.7 542.4 L1092.7 540.2 L1093.7 537.3 L1094.7 533.6 L1095.7 529.3 L1096.7 524.4 L1097.7 519.1 L1098.7 513.5 L1099.7 507.7 L1100.7 501.8 L1101.7 496 L1102.7 490.4 L1103.7 485.1 L1104.7 480.2 L1105.7 475.9 L1106.7 472.2 L1107.7 469.3 L1108.7 467.1 L1109.7 465.8 L1110.7 465.4 L1111.7 466.2 L1112.8 468.4 L1113.8 472.1 L1114.8 477 L1115.9 483.1 L1116.9 489.9 L1117.9 497.4 L1119 505.1 L1120 512.9 L1121 520.4 L1122 527.2 L1123.1 533.3 L1124.1 538.2 L1125.1 541.9 L1126.2 544.1 L1127.2 544.9 L1128.2 543 L1129.3 537.4 L1130.3 528.7 L1131.3 517.7 L1132.3 505.6 L1133.4 493.4 L1134.4 482.4 L1135.4 473.7 L1136.5 468.1 L1137.5 466.2 L1138.5 469.2 L1139.5 477.7 L1140.6 490.5 L1141.6 505.5 L1142.6 520.6 L1143.7 533.4 L1144.7 541.9 L1145.7 544.9 L1146.7 537.4 L1147.7 517.7 L1148.8 493.4 L1149.8 473.7 L1150.8 466.2 L1152 477.7 L1153.1 505.3 L1154.2 533 L1155.4 544.5 L1156.6 524.7 L1157.9 485.2 L1159.1 465.4 L1160.1 477 L1161.1 504.9 L1162.1 532.9 L1163.1 544.5 L1164.1 524.5 L1165.2 484.6 L1166.2 464.6 L1167.3 484.6 L1168.5 524.5 L1169.6 544.5 L1170.6 524.3 L1171.7 484 L1172.7 463.8 L1173.6 484 L1174.6 524.3 L1175.5 544.5 L1176.4 524.1 L1177.2 483.4 L1178.1 463 L1179 483.4 L1179.8 524.1 L1180.7 544.5 L1181.5 524.1 L1182.4 483.4 L1183.2 463" stroke="#00ff00" stroke-width="3.4" fill="none" stroke-linejoin="round"/></defs>
<use href="#gw" transform="translate(0,-1.6)"/><use href="#gw"/><use href="#gw" transform="translate(0,1.6)"/>
<path d="M1180 462 L1220 460 L1266 457.7 L1268.4 460.2 L1271.7 470.3 L1274.3 488.8 L1279.3 500.6 L1274.3 512.4 L1271.7 534.3 L1268.4 542.7 L1266 545.2 L1220 545 L1180 544.8 Z" fill="#00ff00"/>
<path d="M839.6 359 V668" stroke="#00ff00" stroke-width="2.6"/>
<g stroke="#c8c8c8" stroke-width="2.4" fill="none">
<path d="M1825.7 15.6 H1428.3 V674.6 H1825.7 V15.6"/>
<path d="M1417 15.6 H1428.3"/>
<path d="M1417 125.4 H1428.3"/>
<path d="M1417 235.3 H1428.3"/>
<path d="M1417 345.1 H1428.3"/>
<path d="M1417 454.9 H1428.3"/>
<path d="M1417 564.8 H1428.3"/>
<path d="M1417 674.6 H1428.3"/>
<path d="M1825.7 15.6 H1836"/>
<path d="M1825.7 147.4 H1836"/>
<path d="M1825.7 279.2 H1836"/>
<path d="M1825.7 411 H1836"/>
<path d="M1825.7 542.8 H1836"/>
<path d="M1825.7 674.6 H1836"/>
<path d="M1428.9 674.6 V680.5"/>
<path d="M1447.7 674.6 V680.5"/>
<path d="M1461.1 674.6 V680.5"/>
<path d="M1471.5 674.6 V680.5"/>
<path d="M1480 674.6 V680.5"/>
<path d="M1487.2 674.6 V680.5"/>
<path d="M1493.4 674.6 V680.5"/>
<path d="M1498.9 674.6 V680.5"/>
<path d="M1503.8 674.6 V683.5"/>
<path d="M1536.1 674.6 V680.5"/>
<path d="M1554.9 674.6 V680.5"/>
<path d="M1568.3 674.6 V680.5"/>
<path d="M1578.7 674.6 V680.5"/>
<path d="M1587.2 674.6 V680.5"/>
<path d="M1594.4 674.6 V680.5"/>
<path d="M1600.6 674.6 V680.5"/>
<path d="M1606.1 674.6 V680.5"/>
<path d="M1611 674.6 V683.5"/>
<path d="M1643.3 674.6 V680.5"/>
<path d="M1662.1 674.6 V680.5"/>
<path d="M1675.5 674.6 V680.5"/>
<path d="M1685.9 674.6 V680.5"/>
<path d="M1694.4 674.6 V680.5"/>
<path d="M1701.6 674.6 V680.5"/>
<path d="M1707.8 674.6 V680.5"/>
<path d="M1713.3 674.6 V680.5"/>
<path d="M1718.2 674.6 V683.5"/>
<path d="M1750.5 674.6 V680.5"/>
<path d="M1769.3 674.6 V680.5"/>
<path d="M1782.7 674.6 V680.5"/>
<path d="M1793.1 674.6 V680.5"/>
<path d="M1801.6 674.6 V680.5"/>
<path d="M1808.8 674.6 V680.5"/>
<path d="M1815 674.6 V680.5"/>
<path d="M1820.5 674.6 V680.5"/>
<path d="M1825.4 674.6 V683.5"/>
</g>
<g fill="#dcdcd4" font-family="Liberation Sans, sans-serif" font-size="19" text-anchor="end">
<text x="1415.5" y="22.1">30dB</text>
<text x="1415.5" y="131.9">20dB</text>
<text x="1415.5" y="241.8">10dB</text>
<text x="1415.5" y="351.6">0dB</text>
<text x="1415.5" y="461.4">-10dB</text>
<text x="1415.5" y="571.3">-20dB</text>
<text x="1415.5" y="681.1">-30dB</text>
</g>
<g fill="#dcdcd4" font-family="Liberation Sans, sans-serif" font-size="19" text-anchor="start">
<text x="1837.5" y="22.1">-100°</text>
<text x="1837.5" y="153.9">-200°</text>
<text x="1837.5" y="285.7">-300°</text>
<text x="1837.5" y="417.5">-400°</text>
<text x="1837.5" y="549.3">-500°</text>
<text x="1837.5" y="681.1">-600°</text>
</g>
<g fill="#dcdcd4" font-family="Liberation Sans, sans-serif" font-size="19" text-anchor="middle">
<text x="1396.6" y="702">10<tspan font-size="13" dy="-6">1</tspan><tspan dy="6">Hz</tspan></text>
<text x="1503.8" y="702">10<tspan font-size="13" dy="-6">2</tspan><tspan dy="6">Hz</tspan></text>
<text x="1611" y="702">10<tspan font-size="13" dy="-6">3</tspan><tspan dy="6">Hz</tspan></text>
<text x="1718.2" y="702">10<tspan font-size="13" dy="-6">4</tspan><tspan dy="6">Hz</tspan></text>
<text x="1825.4" y="702">10<tspan font-size="13" dy="-6">5</tspan><tspan dy="6">Hz</tspan></text>
</g>
<defs><clipPath id="bclip"><rect x="1429.5" y="14" width="395" height="661"/></clipPath></defs><g clip-path="url(#bclip)">
<path d="M1428.4 155 L1460 103.2 L1492.2 93.3 L1524.6 93.3 L1556.8 94.7 L1568 95.2 L1578.5 95.8 L1589 95.8 L1600 95.8 L1610.5 95.8 L1621 95.8 L1631.6 95.8 L1642 95.8 L1653.5 95.4 L1664 95.4 L1675 95 L1685.5 94.5 L1696 93.7 L1707.4 92.8 L1718 92 L1728.4 92 L1739 97.9 L1749.5 116.8 L1760 157.7 L1771 214.1 L1781.9 280.2 L1792.4 358.1 L1804 449.7 L1814.4 554.6 L1825 669" stroke="#00ff00" stroke-width="3" fill="none"/>
<g fill="#00ff00"><circle cx="1428.4" cy="155" r="2.8"/><circle cx="1460" cy="103.2" r="2.8"/><circle cx="1492.2" cy="93.3" r="2.8"/><circle cx="1524.6" cy="93.3" r="2.8"/><circle cx="1556.8" cy="94.7" r="2.8"/><circle cx="1568" cy="95.2" r="2.8"/><circle cx="1578.5" cy="95.8" r="2.8"/><circle cx="1589" cy="95.8" r="2.8"/><circle cx="1600" cy="95.8" r="2.8"/><circle cx="1610.5" cy="95.8" r="2.8"/><circle cx="1621" cy="95.8" r="2.8"/><circle cx="1631.6" cy="95.8" r="2.8"/><circle cx="1642" cy="95.8" r="2.8"/><circle cx="1653.5" cy="95.4" r="2.8"/><circle cx="1664" cy="95.4" r="2.8"/><circle cx="1675" cy="95" r="2.8"/><circle cx="1685.5" cy="94.5" r="2.8"/><circle cx="1696" cy="93.7" r="2.8"/><circle cx="1707.4" cy="92.8" r="2.8"/><circle cx="1718" cy="92" r="2.8"/><circle cx="1728.4" cy="92" r="2.8"/><circle cx="1739" cy="97.9" r="2.8"/><circle cx="1749.5" cy="116.8" r="2.8"/><circle cx="1760" cy="157.7" r="2.8"/><circle cx="1771" cy="214.1" r="2.8"/><circle cx="1781.9" cy="280.2" r="2.8"/><circle cx="1792.4" cy="358.1" r="2.8"/><circle cx="1804" cy="449.7" r="2.8"/><circle cx="1814.4" cy="554.6" r="2.8"/><circle cx="1825" cy="669" r="2.8"/></g>
<path d="M1428.4 26.3 L1460 70.5 L1492.2 95.8 L1524.6 108.8 L1556.8 116.4 L1567.4 119 L1578.5 120.6 L1589 122.5 L1600 124.4 L1610.5 126.5 L1621 129.5 L1631.6 132.8 L1642 136.2 L1653 141.3 L1664 147.6 L1674.5 154.7 L1685.5 163.6 L1696 175.8 L1707 191.8 L1718 212.8 L1728.4 241.5 L1739 280.6 L1749.5 330.7 L1760.6 383 L1771.5 433 L1782 481.2 L1793 529.8 L1803.5 572.2 L1814.4 600.4 L1825 626" stroke="#00ff00" stroke-width="2.6" stroke-dasharray="0.1 4.6" stroke-linecap="round" fill="none"/>
<g fill="none" stroke="#00ff00" stroke-width="1.3"><circle cx="1428.4" cy="26.3" r="3.3"/><circle cx="1460" cy="70.5" r="3.3"/><circle cx="1492.2" cy="95.8" r="3.3"/><circle cx="1524.6" cy="108.8" r="3.3"/><circle cx="1556.8" cy="116.4" r="3.3"/><circle cx="1567.4" cy="119" r="3.3"/><circle cx="1578.5" cy="120.6" r="3.3"/><circle cx="1589" cy="122.5" r="3.3"/><circle cx="1600" cy="124.4" r="3.3"/><circle cx="1610.5" cy="126.5" r="3.3"/><circle cx="1621" cy="129.5" r="3.3"/><circle cx="1631.6" cy="132.8" r="3.3"/><circle cx="1642" cy="136.2" r="3.3"/><circle cx="1653" cy="141.3" r="3.3"/><circle cx="1664" cy="147.6" r="3.3"/><circle cx="1674.5" cy="154.7" r="3.3"/><circle cx="1685.5" cy="163.6" r="3.3"/><circle cx="1696" cy="175.8" r="3.3"/><circle cx="1707" cy="191.8" r="3.3"/><circle cx="1718" cy="212.8" r="3.3"/><circle cx="1728.4" cy="241.5" r="3.3"/><circle cx="1739" cy="280.6" r="3.3"/><circle cx="1749.5" cy="330.7" r="3.3"/><circle cx="1760.6" cy="383" r="3.3"/><circle cx="1771.5" cy="433" r="3.3"/><circle cx="1782" cy="481.2" r="3.3"/><circle cx="1793" cy="529.8" r="3.3"/><circle cx="1803.5" cy="572.2" r="3.3"/><circle cx="1814.4" cy="600.4" r="3.3"/><circle cx="1825" cy="626" r="3.3"/></g>
</g>
<text transform="translate(767,174) rotate(-90)" text-anchor="middle" font-family="Liberation Sans, sans-serif" font-weight="bold" font-size="27" fill="#0040ff" textLength="70" lengthAdjust="spacingAndGlyphs">V(IN)</text>
<text transform="translate(774,516) rotate(-90)" text-anchor="middle" font-family="Liberation Sans, sans-serif" font-weight="bold" font-size="27" fill="#00ff00" textLength="199" lengthAdjust="spacingAndGlyphs">V(SpkrP,SpkrN)</text>
<text transform="translate(1352,346) rotate(-90)" text-anchor="middle" font-family="Liberation Sans, sans-serif" font-weight="bold" font-size="25" fill="#00ff00" textLength="215" lengthAdjust="spacingAndGlyphs">TransferFunction</text>
</svg>
</body></html>
